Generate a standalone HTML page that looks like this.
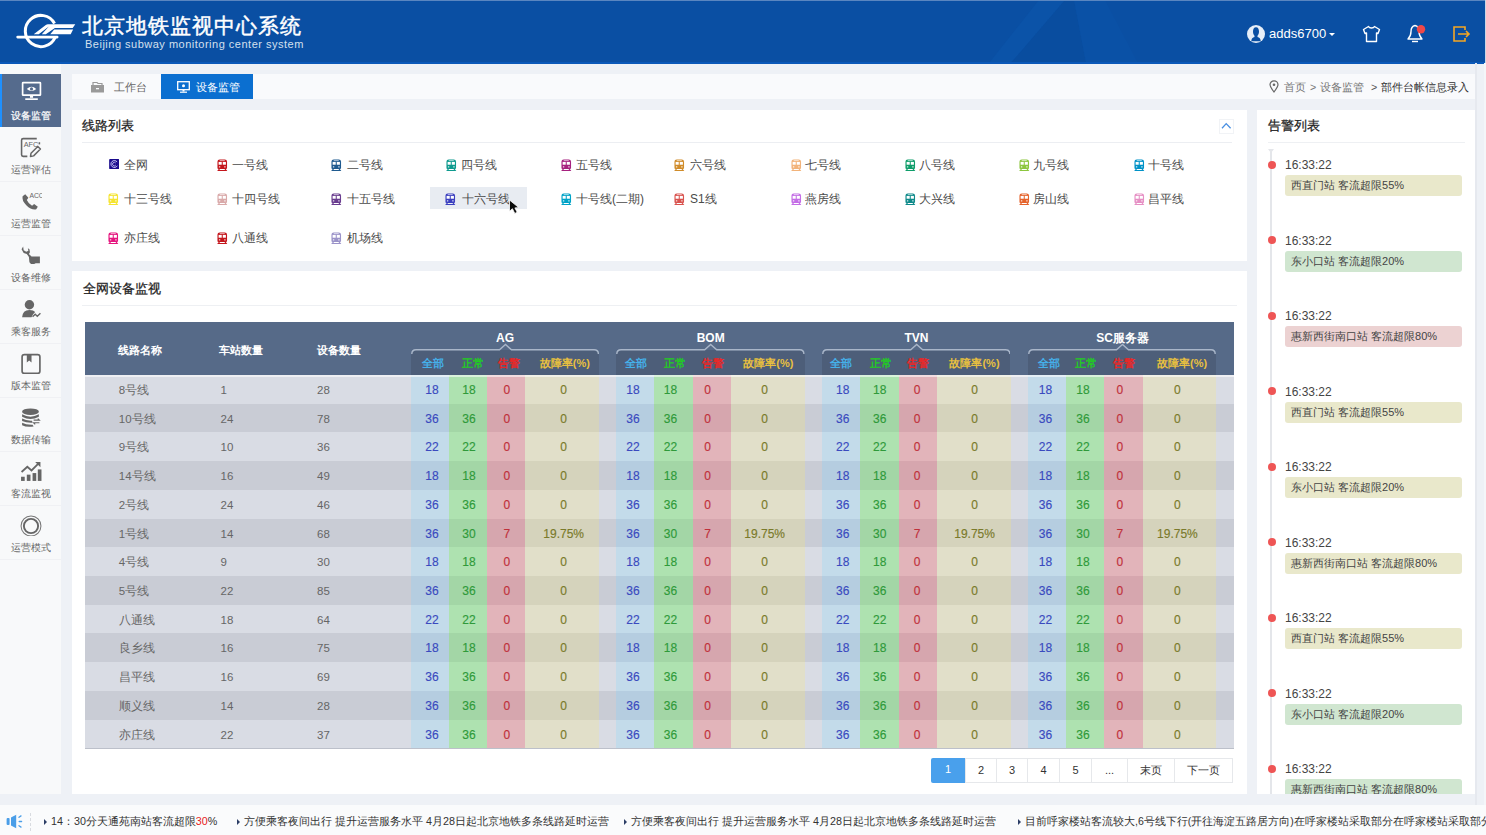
<!DOCTYPE html>
<html><head><meta charset="utf-8">
<style>
*{margin:0;padding:0;box-sizing:border-box}
html,body{width:1486px;height:835px;overflow:hidden;background:#eef1f6;font-family:"Liberation Sans",sans-serif;color:#333}
.a{position:absolute}
.nw{white-space:nowrap}
#hdr{position:absolute;left:0;top:0;width:1486px;height:63.6px;background:#0a4fa3;overflow:hidden}
.si{position:absolute;left:0;width:61px;height:54px}
.si span{position:absolute;left:0;width:61px;top:35px;font-size:10.4px;line-height:13px;color:#666;text-align:center;white-space:nowrap}
.si svg{position:absolute;left:19.5px;top:8.5px;width:22px;height:21px}
.ptitle{position:absolute;font-size:12.5px;line-height:16px;color:#222;-webkit-text-stroke:0.25px #222;white-space:nowrap}
.ln{position:absolute;font-size:12px;line-height:14px;color:#4a4a4a;white-space:nowrap}
.th{position:absolute;font-size:11px;line-height:14px;color:#fff;font-weight:bold;white-space:nowrap}
.gh{position:absolute;font-size:12px;line-height:14px;color:#fff;font-weight:bold;text-align:center;white-space:nowrap}
.sh{position:absolute;font-size:11px;line-height:14px;font-weight:bold;text-align:center;white-space:nowrap}
.td{position:absolute;font-size:11.5px;line-height:30px;color:#666;white-space:nowrap}
.tn{position:absolute;font-size:12px;line-height:30.5px;text-align:center;white-space:nowrap;-webkit-text-stroke:0.15px currentColor}
.pg{position:absolute;font-size:11px;line-height:23px;text-align:center;color:#333;top:758px;height:25px}
.al{position:absolute;width:177px;height:21px;border-radius:3px;font-size:11px;line-height:21px;padding-left:6px;color:#444;white-space:nowrap;overflow:hidden}
.tm{position:absolute;font-size:12px;line-height:14px;color:#444;white-space:nowrap}
.dot{position:absolute;width:8px;height:8px;border-radius:50%;background:#ee5555}
.tk{position:absolute;font-size:10.85px;line-height:14px;color:#333;white-space:nowrap;top:814px}
.tri{position:absolute;top:819px;width:0;height:0;border-top:3px solid transparent;border-bottom:3px solid transparent;border-left:3px solid #2c3e66}
</style></head><body>
<div id="hdr">
<svg class="a" style="left:0;top:0" width="1486" height="63" viewBox="0 0 1486 63">
<path d="M989 63 L1039 0 L1065 0 L1011 63 Z" fill="#0b53a8"/>
<path d="M1011 63 L1065 0 L1074 0 L1086 63 Z" fill="#094d9f"/>
<path d="M1086 63 L1074 0 L1105 0 L1138 63 Z" fill="#0a51a6"/>
</svg>
<div class="a" style="left:0;top:0;width:1486px;height:1px;background:#5a86c0"></div>
<div class="a" style="left:0;top:61.6px;width:1486px;height:2px;background:#0b58b8"></div>
<div class="a" style="left:1485px;top:0;width:1px;height:63px;background:#c9d6e6"></div>
<svg class="a" style="left:0;top:0" width="80" height="60" viewBox="0 0 80 60">
<path d="M54.54 23.44 A15.6 15.6 0 1 0 55.15 37.35" fill="none" stroke="#fff" stroke-width="3"/>
<rect x="16.3" y="35.7" width="42.2" height="2.7" rx="1.3" fill="#fff"/>
<path d="M33.7 34.3 L45.8 25 Q46.8 24.2 48 24.2 L75.3 24.2 L72.7 27.9 L54.9 27.9 L45.8 34.3 L41.8 34.3 L48.8 26.4 L38.7 34.3 Z" fill="#fff"/>
<path d="M50.2 34.3 L54.2 29.4 L73.1 29.4 L70.7 34.3 Z" fill="#fff"/>
</svg>
<div class="a nw" style="left:81.5px;top:12.8px;font-size:21px;line-height:26px;letter-spacing:1px;color:#fff;-webkit-text-stroke:0.45px #fff">北京地铁监视中心系统</div>
<div class="a nw" style="left:85px;top:37.5px;font-size:11px;line-height:13px;color:#d5e0ee;letter-spacing:0.5px">Beijing subway monitoring center system</div>
<svg class="a" style="left:1247px;top:25px" width="18" height="18" viewBox="0 0 18 18">
<circle cx="9" cy="9" r="9" fill="#e6eef8"/>
<path d="M9 2.3 C6.9 2.3 6 4.3 6 6.6 C6 8.6 6.7 10 7.5 10.8 L7.5 11.9 C5.6 12.4 4.4 13.6 4.3 16.2 L13.7 16.2 C13.6 13.6 12.4 12.4 10.5 11.9 L10.5 10.8 C11.3 10 12 8.6 12 6.6 C12 4.3 11.1 2.3 9 2.3 Z" fill="#0a4fa3"/>
</svg>
<div class="a nw" style="left:1269px;top:26px;font-size:13px;line-height:16px;color:#fff">adds6700</div>
<div class="a" style="left:1329px;top:33px;width:0;height:0;border-left:3px solid transparent;border-right:3px solid transparent;border-top:3.5px solid #fff"></div>
<svg class="a" style="left:1362px;top:25px" width="19" height="18" viewBox="0 0 19 18">
<path d="M6.5 1.5 L1.5 4.5 L3 8.5 L4.5 8 V16.5 H14.5 V8 L16 8.5 L17.5 4.5 L12.5 1.5 C11.5 3.5 7.5 3.5 6.5 1.5 Z" fill="none" stroke="#fff" stroke-width="1.4" stroke-linejoin="round"/>
</svg>
<svg class="a" style="left:1406px;top:24px" width="22" height="19" viewBox="0 0 22 19">
<path d="M9 1.5 C6.5 2 5 4.5 5 7.5 C5 10.5 4 13 2 15 H16 C14 13 13 10.5 13 7.5 C13 4.5 11.5 2 9 1.5 Z" fill="none" stroke="#fff" stroke-width="1.4" stroke-linejoin="round"/>
<rect x="6" y="16.8" width="6" height="1.4" fill="#fff"/>
<circle cx="15" cy="5.3" r="4.2" fill="#f04848"/>
</svg>
<svg class="a" style="left:1453px;top:26px" width="18" height="16" viewBox="0 0 18 16">
<path d="M12 4 V1 H1 V15 H12 V12" fill="none" stroke="#f5a623" stroke-width="1.6"/>
<path d="M5 8 H16 M13 5 L16 8 L13 11" fill="none" stroke="#f5a623" stroke-width="1.6"/>
</svg>
</div>

<div class="a" style="left:0;top:63.6px;width:61px;height:730.4px;background:#f8f9fa"></div>
<div class="si" style="top:74px;height:53px;background:#556b8d"><div class="a" style="left:0;top:0;width:2px;height:53px;background:#1e90ff"></div><svg style="top:7px" width="21" height="20" viewBox="0 0 21 20"><rect x="2.5" y="1.5" width="17" height="12" rx="0.5" fill="none" stroke="#fff" stroke-width="1.6"/><path d="M6.5 7.5 Q11 3.5 15.5 7.5 Q11 11.5 6.5 7.5Z" fill="#fff"/><circle cx="11" cy="7.5" r="1.5" fill="#556b8d"/><rect x="9.5" y="14" width="3" height="2" fill="#fff"/><rect x="5" y="16.5" width="12" height="1.6" fill="#fff"/></svg><span style="color:#fff;-webkit-text-stroke:0.2px #fff">设备监管</span></div>
<div class="si" style="top:128px;border-bottom:1px solid #f0f1f4"><svg width="21" height="20" viewBox="0 0 21 20"><path d="M16 1.5 H3 Q1.5 1.5 1.5 3 V17 Q1.5 18.5 3 18.5 H7" fill="none" stroke="#666" stroke-width="1.5"/><path d="M18.5 5 V7" fill="none" stroke="#666" stroke-width="1.5"/><text x="3.5" y="9.5" font-size="7" font-family="Liberation Sans" fill="#666">AFC</text><path d="M10 18.5 L10.5 15.5 L17 9 L19.5 11.5 L13 18 Z" fill="none" stroke="#666" stroke-width="1.4" stroke-linejoin="round"/></svg><span>运营评估</span></div>
<div class="si" style="top:182px;border-bottom:1px solid #f0f1f4"><svg width="21" height="20" viewBox="0 0 21 20"><path d="M2.5 5 L5 3 L8 6.5 L6.5 8.5 Q8 12 11.5 14 L13.5 12.5 L17 15 L15.5 17.5 Q11 18.5 6 13.5 Q1.5 9 2.5 5Z" fill="#666"/><text x="9" y="7" font-size="6.5" font-family="Liberation Sans" fill="#666">ACC</text></svg><span>运营监管</span></div>
<div class="si" style="top:236px;border-bottom:1px solid #f0f1f4"><svg width="21" height="20" viewBox="0 0 21 20"><path d="M3 1.5 L3.5 5 L6 6.5 L8 5.5 L7.5 3 L9 4 L9.5 7 L8.5 8.5 L11 11 H19 V17.5 H15 L13.5 18 H10.5 L9 16.5 L8.5 11.5 L6.5 8.5 L3.5 7.5 L1.5 4 Z" fill="#666"/></svg><span>设备维修</span></div>
<div class="si" style="top:290px;border-bottom:1px solid #f0f1f4"><svg width="21" height="20" viewBox="0 0 21 20"><circle cx="9" cy="5.5" r="4.5" fill="#666"/><path d="M2 17.5 Q2.5 10.5 9 10.5 Q13 10.5 14.5 12.5 L12.5 14.5 L11 17.5 Z" fill="#666"/><path d="M12 17 L14.5 14.5 L16.5 16.5 L19.5 13.5" fill="none" stroke="#666" stroke-width="1.3"/></svg><span>乘客服务</span></div>
<div class="si" style="top:344px;border-bottom:1px solid #f0f1f4"><svg width="21" height="20" viewBox="0 0 21 20"><rect x="2" y="1.5" width="17" height="18" rx="2.2" fill="none" stroke="#666" stroke-width="1.6"/><path d="M6.5 2 H11 V9 L8.75 7.2 L6.5 9 Z" fill="#666"/></svg><span>版本监管</span></div>
<div class="si" style="top:398px;border-bottom:1px solid #f0f1f4"><svg width="21" height="20" viewBox="0 0 21 20"><ellipse cx="10" cy="4.5" rx="8" ry="3.2" fill="#666"/><path d="M2 7 Q10 11.5 18 7 V9.3 Q10 13.5 2 9.3Z M2 11 Q6 13.3 11.5 13 L12 15 Q6 15.3 2 13.3Z M2 15 Q6 17.3 12 17 L13 18.5 Q6 19.5 2 17.3Z" fill="#666"/><path d="M13 12.5 H18.5 L17 11 M18.5 15 H13 L14.5 16.5" fill="none" stroke="#666" stroke-width="1.1"/></svg><span>数据传输</span></div>
<div class="si" style="top:452px;border-bottom:1px solid #f0f1f4"><svg width="21" height="20" viewBox="0 0 21 20"><path d="M1.5 10.5 L7 5.5 L11 9 L18 2" fill="none" stroke="#666" stroke-width="1.7"/><path d="M14.5 1 H19.5 V6 Z" fill="#666"/><rect x="1" y="15" width="3.5" height="4" fill="#666"/><rect x="6.5" y="13" width="3.5" height="6" fill="#666"/><rect x="12" y="11.5" width="3.5" height="7.5" fill="#666"/><rect x="17" y="8" width="3.5" height="11" fill="#666"/></svg><span>客流监视</span></div>
<div class="si" style="top:506px;border-bottom:1px solid #f0f1f4"><svg width="21" height="20" viewBox="0 0 21 20"><circle cx="10.5" cy="10.5" r="9.5" fill="none" stroke="#777" stroke-width="1"/><circle cx="10.5" cy="10.5" r="6.8" fill="none" stroke="#666" stroke-width="1.8"/></svg><span>运营模式</span></div>
<div class="a" style="left:72px;top:74px;width:1403px;height:25px;background:#f9fafc"></div>
<svg class="a" style="left:90px;top:81px" width="15" height="12" viewBox="0 0 15 12">
<path d="M1 4 H14 V11.5 H1 Z" fill="#9a9a9a"/><path d="M3 4 V1.5 H7 L8 2.5 H12 V4" fill="none" stroke="#9a9a9a" stroke-width="1.2"/><rect x="6" y="7" width="3" height="1.3" fill="#f9fafc"/>
</svg>
<div class="a nw" style="left:114px;top:80px;font-size:11px;line-height:14px;color:#666">工作台</div>
<div class="a" style="left:161px;top:74px;width:92px;height:25px;background:#0b6fd0"></div>
<svg class="a" style="left:177px;top:81px" width="13" height="12" viewBox="0 0 13 12">
<rect x="0.7" y="0.7" width="11.6" height="8" fill="none" stroke="#fff" stroke-width="1.3"/><circle cx="6.5" cy="4.7" r="1.5" fill="#fff"/><rect x="5.5" y="9" width="2" height="1.5" fill="#fff"/><rect x="3" y="10.6" width="7" height="1.2" fill="#fff"/>
</svg>
<div class="a nw" style="left:196px;top:80px;font-size:11px;line-height:14px;color:#fff">设备监管</div>
<svg class="a" style="left:1269px;top:80px" width="10" height="13" viewBox="0 0 10 13">
<path d="M5 12 C2 8 1 6.5 1 4.8 A4 4 0 0 1 9 4.8 C9 6.5 8 8 5 12Z" fill="none" stroke="#666" stroke-width="1.2"/><circle cx="5" cy="4.8" r="1.3" fill="#666"/>
</svg>
<div class="a nw" style="left:1284px;top:80px;font-size:10.7px;line-height:14px;color:#777">首页</div>
<div class="a nw" style="left:1310px;top:80px;font-size:10.7px;line-height:14px;color:#777">&gt;</div>
<div class="a nw" style="left:1320px;top:80px;font-size:10.7px;line-height:14px;color:#777">设备监管</div>
<div class="a nw" style="left:1371px;top:80px;font-size:10.7px;line-height:14px;color:#555">&gt;</div>
<div class="a nw" style="left:1380.5px;top:80px;font-size:10.7px;line-height:14px;color:#333">部件台帐信息录入</div>

<div class="a" style="left:72px;top:110px;width:1175px;height:151px;background:#fff"></div>
<div class="ptitle" style="left:82px;top:118px">线路列表</div>
<div class="a" style="left:82px;top:141.5px;width:1150px;height:1px;background:#eceef2"></div>
<div class="a" style="left:1218.5px;top:119px;width:15px;height:14.5px;border:1px solid #f1f3f6;background:#fff"></div>
<svg class="a" style="left:1221px;top:122px" width="11" height="8" viewBox="0 0 11 8"><path d="M1 6.2 L5.2 1.6 L9.6 6.2" fill="none" stroke="#4a90e2" stroke-width="1.3"/></svg>
<div class="a" style="left:430px;top:187px;width:97px;height:22px;background:#e8ecf2"></div>

<svg class="a" style="left:108.5px;top:158.7px" width="10.5" height="10.2" viewBox="0 0 11 11"><rect x="0" y="0" width="11" height="11" rx="1" fill="#1a0a8c"/><path d="M8.6 3.2 A3.7 3.7 0 1 0 8.8 7.3" fill="none" stroke="#d8d8ff" stroke-width="1"/><path d="M7 4.3 A1.9 1.9 0 1 0 7.1 6.6" fill="none" stroke="#d8d8ff" stroke-width="0.9"/></svg>
<div class="ln" style="left:124px;top:158px">全网</div>
<svg class="a" style="left:217px;top:158.5px" width="10.5" height="12.5" viewBox="0 0 10 12"><path d="M2.6 0.4 H7.4 Q9.6 0.4 9.6 2.6 V8.6 Q9.6 9.6 8.6 9.6 H1.4 Q0.4 9.6 0.4 8.6 V2.6 Q0.4 0.4 2.6 0.4Z" fill="#c4161c"/><rect x="2.6" y="1.2" width="4.8" height="0.8" fill="#fff" opacity="0.75"/><rect x="1.5" y="2.8" width="3" height="2.7" fill="#fff"/><rect x="5.5" y="2.8" width="3" height="2.7" fill="#fff"/><rect x="1.8" y="7" width="1.3" height="1.1" fill="#fff" opacity="0.9"/><rect x="6.9" y="7" width="1.3" height="1.1" fill="#fff" opacity="0.9"/><path d="M0.5 11.8 L2.4 9.5 M9.5 11.8 L7.6 9.5 M1.2 11 H8.8" stroke="#c4161c" stroke-width="1"/></svg>
<div class="ln" style="left:232px;top:158px">一号线</div>
<svg class="a" style="left:331px;top:158.5px" width="10.5" height="12.5" viewBox="0 0 10 12"><path d="M2.6 0.4 H7.4 Q9.6 0.4 9.6 2.6 V8.6 Q9.6 9.6 8.6 9.6 H1.4 Q0.4 9.6 0.4 8.6 V2.6 Q0.4 0.4 2.6 0.4Z" fill="#1f5a8f"/><rect x="2.6" y="1.2" width="4.8" height="0.8" fill="#fff" opacity="0.75"/><rect x="1.5" y="2.8" width="3" height="2.7" fill="#fff"/><rect x="5.5" y="2.8" width="3" height="2.7" fill="#fff"/><rect x="1.8" y="7" width="1.3" height="1.1" fill="#fff" opacity="0.9"/><rect x="6.9" y="7" width="1.3" height="1.1" fill="#fff" opacity="0.9"/><path d="M0.5 11.8 L2.4 9.5 M9.5 11.8 L7.6 9.5 M1.2 11 H8.8" stroke="#1f5a8f" stroke-width="1"/></svg>
<div class="ln" style="left:347px;top:158px">二号线</div>
<svg class="a" style="left:446px;top:158.5px" width="10.5" height="12.5" viewBox="0 0 10 12"><path d="M2.6 0.4 H7.4 Q9.6 0.4 9.6 2.6 V8.6 Q9.6 9.6 8.6 9.6 H1.4 Q0.4 9.6 0.4 8.6 V2.6 Q0.4 0.4 2.6 0.4Z" fill="#0e9a8e"/><rect x="2.6" y="1.2" width="4.8" height="0.8" fill="#fff" opacity="0.75"/><rect x="1.5" y="2.8" width="3" height="2.7" fill="#fff"/><rect x="5.5" y="2.8" width="3" height="2.7" fill="#fff"/><rect x="1.8" y="7" width="1.3" height="1.1" fill="#fff" opacity="0.9"/><rect x="6.9" y="7" width="1.3" height="1.1" fill="#fff" opacity="0.9"/><path d="M0.5 11.8 L2.4 9.5 M9.5 11.8 L7.6 9.5 M1.2 11 H8.8" stroke="#0e9a8e" stroke-width="1"/></svg>
<div class="ln" style="left:461px;top:158px">四号线</div>
<svg class="a" style="left:561px;top:158.5px" width="10.5" height="12.5" viewBox="0 0 10 12"><path d="M2.6 0.4 H7.4 Q9.6 0.4 9.6 2.6 V8.6 Q9.6 9.6 8.6 9.6 H1.4 Q0.4 9.6 0.4 8.6 V2.6 Q0.4 0.4 2.6 0.4Z" fill="#a6217f"/><rect x="2.6" y="1.2" width="4.8" height="0.8" fill="#fff" opacity="0.75"/><rect x="1.5" y="2.8" width="3" height="2.7" fill="#fff"/><rect x="5.5" y="2.8" width="3" height="2.7" fill="#fff"/><rect x="1.8" y="7" width="1.3" height="1.1" fill="#fff" opacity="0.9"/><rect x="6.9" y="7" width="1.3" height="1.1" fill="#fff" opacity="0.9"/><path d="M0.5 11.8 L2.4 9.5 M9.5 11.8 L7.6 9.5 M1.2 11 H8.8" stroke="#a6217f" stroke-width="1"/></svg>
<div class="ln" style="left:576px;top:158px">五号线</div>
<svg class="a" style="left:674px;top:158.5px" width="10.5" height="12.5" viewBox="0 0 10 12"><path d="M2.6 0.4 H7.4 Q9.6 0.4 9.6 2.6 V8.6 Q9.6 9.6 8.6 9.6 H1.4 Q0.4 9.6 0.4 8.6 V2.6 Q0.4 0.4 2.6 0.4Z" fill="#d08c2a"/><rect x="2.6" y="1.2" width="4.8" height="0.8" fill="#fff" opacity="0.75"/><rect x="1.5" y="2.8" width="3" height="2.7" fill="#fff"/><rect x="5.5" y="2.8" width="3" height="2.7" fill="#fff"/><rect x="1.8" y="7" width="1.3" height="1.1" fill="#fff" opacity="0.9"/><rect x="6.9" y="7" width="1.3" height="1.1" fill="#fff" opacity="0.9"/><path d="M0.5 11.8 L2.4 9.5 M9.5 11.8 L7.6 9.5 M1.2 11 H8.8" stroke="#d08c2a" stroke-width="1"/></svg>
<div class="ln" style="left:690px;top:158px">六号线</div>
<svg class="a" style="left:791px;top:158.5px" width="10.5" height="12.5" viewBox="0 0 10 12"><path d="M2.6 0.4 H7.4 Q9.6 0.4 9.6 2.6 V8.6 Q9.6 9.6 8.6 9.6 H1.4 Q0.4 9.6 0.4 8.6 V2.6 Q0.4 0.4 2.6 0.4Z" fill="#f2b37a"/><rect x="2.6" y="1.2" width="4.8" height="0.8" fill="#fff" opacity="0.75"/><rect x="1.5" y="2.8" width="3" height="2.7" fill="#fff"/><rect x="5.5" y="2.8" width="3" height="2.7" fill="#fff"/><rect x="1.8" y="7" width="1.3" height="1.1" fill="#fff" opacity="0.9"/><rect x="6.9" y="7" width="1.3" height="1.1" fill="#fff" opacity="0.9"/><path d="M0.5 11.8 L2.4 9.5 M9.5 11.8 L7.6 9.5 M1.2 11 H8.8" stroke="#f2b37a" stroke-width="1"/></svg>
<div class="ln" style="left:805px;top:158px">七号线</div>
<svg class="a" style="left:905px;top:158.5px" width="10.5" height="12.5" viewBox="0 0 10 12"><path d="M2.6 0.4 H7.4 Q9.6 0.4 9.6 2.6 V8.6 Q9.6 9.6 8.6 9.6 H1.4 Q0.4 9.6 0.4 8.6 V2.6 Q0.4 0.4 2.6 0.4Z" fill="#0f9d6a"/><rect x="2.6" y="1.2" width="4.8" height="0.8" fill="#fff" opacity="0.75"/><rect x="1.5" y="2.8" width="3" height="2.7" fill="#fff"/><rect x="5.5" y="2.8" width="3" height="2.7" fill="#fff"/><rect x="1.8" y="7" width="1.3" height="1.1" fill="#fff" opacity="0.9"/><rect x="6.9" y="7" width="1.3" height="1.1" fill="#fff" opacity="0.9"/><path d="M0.5 11.8 L2.4 9.5 M9.5 11.8 L7.6 9.5 M1.2 11 H8.8" stroke="#0f9d6a" stroke-width="1"/></svg>
<div class="ln" style="left:919px;top:158px">八号线</div>
<svg class="a" style="left:1019px;top:158.5px" width="10.5" height="12.5" viewBox="0 0 10 12"><path d="M2.6 0.4 H7.4 Q9.6 0.4 9.6 2.6 V8.6 Q9.6 9.6 8.6 9.6 H1.4 Q0.4 9.6 0.4 8.6 V2.6 Q0.4 0.4 2.6 0.4Z" fill="#8cc63f"/><rect x="2.6" y="1.2" width="4.8" height="0.8" fill="#fff" opacity="0.75"/><rect x="1.5" y="2.8" width="3" height="2.7" fill="#fff"/><rect x="5.5" y="2.8" width="3" height="2.7" fill="#fff"/><rect x="1.8" y="7" width="1.3" height="1.1" fill="#fff" opacity="0.9"/><rect x="6.9" y="7" width="1.3" height="1.1" fill="#fff" opacity="0.9"/><path d="M0.5 11.8 L2.4 9.5 M9.5 11.8 L7.6 9.5 M1.2 11 H8.8" stroke="#8cc63f" stroke-width="1"/></svg>
<div class="ln" style="left:1033px;top:158px">九号线</div>
<svg class="a" style="left:1134px;top:158.5px" width="10.5" height="12.5" viewBox="0 0 10 12"><path d="M2.6 0.4 H7.4 Q9.6 0.4 9.6 2.6 V8.6 Q9.6 9.6 8.6 9.6 H1.4 Q0.4 9.6 0.4 8.6 V2.6 Q0.4 0.4 2.6 0.4Z" fill="#0092c7"/><rect x="2.6" y="1.2" width="4.8" height="0.8" fill="#fff" opacity="0.75"/><rect x="1.5" y="2.8" width="3" height="2.7" fill="#fff"/><rect x="5.5" y="2.8" width="3" height="2.7" fill="#fff"/><rect x="1.8" y="7" width="1.3" height="1.1" fill="#fff" opacity="0.9"/><rect x="6.9" y="7" width="1.3" height="1.1" fill="#fff" opacity="0.9"/><path d="M0.5 11.8 L2.4 9.5 M9.5 11.8 L7.6 9.5 M1.2 11 H8.8" stroke="#0092c7" stroke-width="1"/></svg>
<div class="ln" style="left:1148px;top:158px">十号线</div>
<svg class="a" style="left:108px;top:192.5px" width="10.5" height="12.5" viewBox="0 0 10 12"><path d="M2.6 0.4 H7.4 Q9.6 0.4 9.6 2.6 V8.6 Q9.6 9.6 8.6 9.6 H1.4 Q0.4 9.6 0.4 8.6 V2.6 Q0.4 0.4 2.6 0.4Z" fill="#f5e431"/><rect x="2.6" y="1.2" width="4.8" height="0.8" fill="#fff" opacity="0.75"/><rect x="1.5" y="2.8" width="3" height="2.7" fill="#fff"/><rect x="5.5" y="2.8" width="3" height="2.7" fill="#fff"/><rect x="1.8" y="7" width="1.3" height="1.1" fill="#fff" opacity="0.9"/><rect x="6.9" y="7" width="1.3" height="1.1" fill="#fff" opacity="0.9"/><path d="M0.5 11.8 L2.4 9.5 M9.5 11.8 L7.6 9.5 M1.2 11 H8.8" stroke="#f5e431" stroke-width="1"/></svg>
<div class="ln" style="left:124px;top:192px">十三号线</div>
<svg class="a" style="left:217px;top:192.5px" width="10.5" height="12.5" viewBox="0 0 10 12"><path d="M2.6 0.4 H7.4 Q9.6 0.4 9.6 2.6 V8.6 Q9.6 9.6 8.6 9.6 H1.4 Q0.4 9.6 0.4 8.6 V2.6 Q0.4 0.4 2.6 0.4Z" fill="#d9a9a9"/><rect x="2.6" y="1.2" width="4.8" height="0.8" fill="#fff" opacity="0.75"/><rect x="1.5" y="2.8" width="3" height="2.7" fill="#fff"/><rect x="5.5" y="2.8" width="3" height="2.7" fill="#fff"/><rect x="1.8" y="7" width="1.3" height="1.1" fill="#fff" opacity="0.9"/><rect x="6.9" y="7" width="1.3" height="1.1" fill="#fff" opacity="0.9"/><path d="M0.5 11.8 L2.4 9.5 M9.5 11.8 L7.6 9.5 M1.2 11 H8.8" stroke="#d9a9a9" stroke-width="1"/></svg>
<div class="ln" style="left:232px;top:192px">十四号线</div>
<svg class="a" style="left:331px;top:192.5px" width="10.5" height="12.5" viewBox="0 0 10 12"><path d="M2.6 0.4 H7.4 Q9.6 0.4 9.6 2.6 V8.6 Q9.6 9.6 8.6 9.6 H1.4 Q0.4 9.6 0.4 8.6 V2.6 Q0.4 0.4 2.6 0.4Z" fill="#6a3d8f"/><rect x="2.6" y="1.2" width="4.8" height="0.8" fill="#fff" opacity="0.75"/><rect x="1.5" y="2.8" width="3" height="2.7" fill="#fff"/><rect x="5.5" y="2.8" width="3" height="2.7" fill="#fff"/><rect x="1.8" y="7" width="1.3" height="1.1" fill="#fff" opacity="0.9"/><rect x="6.9" y="7" width="1.3" height="1.1" fill="#fff" opacity="0.9"/><path d="M0.5 11.8 L2.4 9.5 M9.5 11.8 L7.6 9.5 M1.2 11 H8.8" stroke="#6a3d8f" stroke-width="1"/></svg>
<div class="ln" style="left:347px;top:192px">十五号线</div>
<svg class="a" style="left:445px;top:192.5px" width="10.5" height="12.5" viewBox="0 0 10 12"><path d="M2.6 0.4 H7.4 Q9.6 0.4 9.6 2.6 V8.6 Q9.6 9.6 8.6 9.6 H1.4 Q0.4 9.6 0.4 8.6 V2.6 Q0.4 0.4 2.6 0.4Z" fill="#3b3fbf"/><rect x="2.6" y="1.2" width="4.8" height="0.8" fill="#fff" opacity="0.75"/><rect x="1.5" y="2.8" width="3" height="2.7" fill="#fff"/><rect x="5.5" y="2.8" width="3" height="2.7" fill="#fff"/><rect x="1.8" y="7" width="1.3" height="1.1" fill="#fff" opacity="0.9"/><rect x="6.9" y="7" width="1.3" height="1.1" fill="#fff" opacity="0.9"/><path d="M0.5 11.8 L2.4 9.5 M9.5 11.8 L7.6 9.5 M1.2 11 H8.8" stroke="#3b3fbf" stroke-width="1"/></svg>
<div class="ln" style="left:462px;top:192px">十六号线</div>
<svg class="a" style="left:561px;top:192.5px" width="10.5" height="12.5" viewBox="0 0 10 12"><path d="M2.6 0.4 H7.4 Q9.6 0.4 9.6 2.6 V8.6 Q9.6 9.6 8.6 9.6 H1.4 Q0.4 9.6 0.4 8.6 V2.6 Q0.4 0.4 2.6 0.4Z" fill="#00a3c7"/><rect x="2.6" y="1.2" width="4.8" height="0.8" fill="#fff" opacity="0.75"/><rect x="1.5" y="2.8" width="3" height="2.7" fill="#fff"/><rect x="5.5" y="2.8" width="3" height="2.7" fill="#fff"/><rect x="1.8" y="7" width="1.3" height="1.1" fill="#fff" opacity="0.9"/><rect x="6.9" y="7" width="1.3" height="1.1" fill="#fff" opacity="0.9"/><path d="M0.5 11.8 L2.4 9.5 M9.5 11.8 L7.6 9.5 M1.2 11 H8.8" stroke="#00a3c7" stroke-width="1"/></svg>
<div class="ln" style="left:576px;top:192px">十号线(二期)</div>
<svg class="a" style="left:674px;top:192.5px" width="10.5" height="12.5" viewBox="0 0 10 12"><path d="M2.6 0.4 H7.4 Q9.6 0.4 9.6 2.6 V8.6 Q9.6 9.6 8.6 9.6 H1.4 Q0.4 9.6 0.4 8.6 V2.6 Q0.4 0.4 2.6 0.4Z" fill="#d9534f"/><rect x="2.6" y="1.2" width="4.8" height="0.8" fill="#fff" opacity="0.75"/><rect x="1.5" y="2.8" width="3" height="2.7" fill="#fff"/><rect x="5.5" y="2.8" width="3" height="2.7" fill="#fff"/><rect x="1.8" y="7" width="1.3" height="1.1" fill="#fff" opacity="0.9"/><rect x="6.9" y="7" width="1.3" height="1.1" fill="#fff" opacity="0.9"/><path d="M0.5 11.8 L2.4 9.5 M9.5 11.8 L7.6 9.5 M1.2 11 H8.8" stroke="#d9534f" stroke-width="1"/></svg>
<div class="ln" style="left:690px;top:192px">S1线</div>
<svg class="a" style="left:791px;top:192.5px" width="10.5" height="12.5" viewBox="0 0 10 12"><path d="M2.6 0.4 H7.4 Q9.6 0.4 9.6 2.6 V8.6 Q9.6 9.6 8.6 9.6 H1.4 Q0.4 9.6 0.4 8.6 V2.6 Q0.4 0.4 2.6 0.4Z" fill="#c46de6"/><rect x="2.6" y="1.2" width="4.8" height="0.8" fill="#fff" opacity="0.75"/><rect x="1.5" y="2.8" width="3" height="2.7" fill="#fff"/><rect x="5.5" y="2.8" width="3" height="2.7" fill="#fff"/><rect x="1.8" y="7" width="1.3" height="1.1" fill="#fff" opacity="0.9"/><rect x="6.9" y="7" width="1.3" height="1.1" fill="#fff" opacity="0.9"/><path d="M0.5 11.8 L2.4 9.5 M9.5 11.8 L7.6 9.5 M1.2 11 H8.8" stroke="#c46de6" stroke-width="1"/></svg>
<div class="ln" style="left:805px;top:192px">燕房线</div>
<svg class="a" style="left:905px;top:192.5px" width="10.5" height="12.5" viewBox="0 0 10 12"><path d="M2.6 0.4 H7.4 Q9.6 0.4 9.6 2.6 V8.6 Q9.6 9.6 8.6 9.6 H1.4 Q0.4 9.6 0.4 8.6 V2.6 Q0.4 0.4 2.6 0.4Z" fill="#0e8a8a"/><rect x="2.6" y="1.2" width="4.8" height="0.8" fill="#fff" opacity="0.75"/><rect x="1.5" y="2.8" width="3" height="2.7" fill="#fff"/><rect x="5.5" y="2.8" width="3" height="2.7" fill="#fff"/><rect x="1.8" y="7" width="1.3" height="1.1" fill="#fff" opacity="0.9"/><rect x="6.9" y="7" width="1.3" height="1.1" fill="#fff" opacity="0.9"/><path d="M0.5 11.8 L2.4 9.5 M9.5 11.8 L7.6 9.5 M1.2 11 H8.8" stroke="#0e8a8a" stroke-width="1"/></svg>
<div class="ln" style="left:919px;top:192px">大兴线</div>
<svg class="a" style="left:1019px;top:192.5px" width="10.5" height="12.5" viewBox="0 0 10 12"><path d="M2.6 0.4 H7.4 Q9.6 0.4 9.6 2.6 V8.6 Q9.6 9.6 8.6 9.6 H1.4 Q0.4 9.6 0.4 8.6 V2.6 Q0.4 0.4 2.6 0.4Z" fill="#e5632b"/><rect x="2.6" y="1.2" width="4.8" height="0.8" fill="#fff" opacity="0.75"/><rect x="1.5" y="2.8" width="3" height="2.7" fill="#fff"/><rect x="5.5" y="2.8" width="3" height="2.7" fill="#fff"/><rect x="1.8" y="7" width="1.3" height="1.1" fill="#fff" opacity="0.9"/><rect x="6.9" y="7" width="1.3" height="1.1" fill="#fff" opacity="0.9"/><path d="M0.5 11.8 L2.4 9.5 M9.5 11.8 L7.6 9.5 M1.2 11 H8.8" stroke="#e5632b" stroke-width="1"/></svg>
<div class="ln" style="left:1033px;top:192px">房山线</div>
<svg class="a" style="left:1134px;top:192.5px" width="10.5" height="12.5" viewBox="0 0 10 12"><path d="M2.6 0.4 H7.4 Q9.6 0.4 9.6 2.6 V8.6 Q9.6 9.6 8.6 9.6 H1.4 Q0.4 9.6 0.4 8.6 V2.6 Q0.4 0.4 2.6 0.4Z" fill="#e68fc4"/><rect x="2.6" y="1.2" width="4.8" height="0.8" fill="#fff" opacity="0.75"/><rect x="1.5" y="2.8" width="3" height="2.7" fill="#fff"/><rect x="5.5" y="2.8" width="3" height="2.7" fill="#fff"/><rect x="1.8" y="7" width="1.3" height="1.1" fill="#fff" opacity="0.9"/><rect x="6.9" y="7" width="1.3" height="1.1" fill="#fff" opacity="0.9"/><path d="M0.5 11.8 L2.4 9.5 M9.5 11.8 L7.6 9.5 M1.2 11 H8.8" stroke="#e68fc4" stroke-width="1"/></svg>
<div class="ln" style="left:1148px;top:192px">昌平线</div>
<svg class="a" style="left:108px;top:231.5px" width="10.5" height="12.5" viewBox="0 0 10 12"><path d="M2.6 0.4 H7.4 Q9.6 0.4 9.6 2.6 V8.6 Q9.6 9.6 8.6 9.6 H1.4 Q0.4 9.6 0.4 8.6 V2.6 Q0.4 0.4 2.6 0.4Z" fill="#e5157e"/><rect x="2.6" y="1.2" width="4.8" height="0.8" fill="#fff" opacity="0.75"/><rect x="1.5" y="2.8" width="3" height="2.7" fill="#fff"/><rect x="5.5" y="2.8" width="3" height="2.7" fill="#fff"/><rect x="1.8" y="7" width="1.3" height="1.1" fill="#fff" opacity="0.9"/><rect x="6.9" y="7" width="1.3" height="1.1" fill="#fff" opacity="0.9"/><path d="M0.5 11.8 L2.4 9.5 M9.5 11.8 L7.6 9.5 M1.2 11 H8.8" stroke="#e5157e" stroke-width="1"/></svg>
<div class="ln" style="left:124px;top:231px">亦庄线</div>
<svg class="a" style="left:217px;top:231.5px" width="10.5" height="12.5" viewBox="0 0 10 12"><path d="M2.6 0.4 H7.4 Q9.6 0.4 9.6 2.6 V8.6 Q9.6 9.6 8.6 9.6 H1.4 Q0.4 9.6 0.4 8.6 V2.6 Q0.4 0.4 2.6 0.4Z" fill="#c4161c"/><rect x="2.6" y="1.2" width="4.8" height="0.8" fill="#fff" opacity="0.75"/><rect x="1.5" y="2.8" width="3" height="2.7" fill="#fff"/><rect x="5.5" y="2.8" width="3" height="2.7" fill="#fff"/><rect x="1.8" y="7" width="1.3" height="1.1" fill="#fff" opacity="0.9"/><rect x="6.9" y="7" width="1.3" height="1.1" fill="#fff" opacity="0.9"/><path d="M0.5 11.8 L2.4 9.5 M9.5 11.8 L7.6 9.5 M1.2 11 H8.8" stroke="#c4161c" stroke-width="1"/></svg>
<div class="ln" style="left:232px;top:231px">八通线</div>
<svg class="a" style="left:331px;top:231.5px" width="10.5" height="12.5" viewBox="0 0 10 12"><path d="M2.6 0.4 H7.4 Q9.6 0.4 9.6 2.6 V8.6 Q9.6 9.6 8.6 9.6 H1.4 Q0.4 9.6 0.4 8.6 V2.6 Q0.4 0.4 2.6 0.4Z" fill="#9b93c9"/><rect x="2.6" y="1.2" width="4.8" height="0.8" fill="#fff" opacity="0.75"/><rect x="1.5" y="2.8" width="3" height="2.7" fill="#fff"/><rect x="5.5" y="2.8" width="3" height="2.7" fill="#fff"/><rect x="1.8" y="7" width="1.3" height="1.1" fill="#fff" opacity="0.9"/><rect x="6.9" y="7" width="1.3" height="1.1" fill="#fff" opacity="0.9"/><path d="M0.5 11.8 L2.4 9.5 M9.5 11.8 L7.6 9.5 M1.2 11 H8.8" stroke="#9b93c9" stroke-width="1"/></svg>
<div class="ln" style="left:347px;top:231px">机场线</div>
<svg class="a" style="left:507.5px;top:198.5px" width="12" height="16" viewBox="0 0 12 16"><path d="M1.5 1 L1.5 12.3 L4.4 9.7 L6.8 14.4 L9.2 13.3 L6.9 8.9 L10.8 8.6 Z" fill="#0a0a0a" stroke="#fff" stroke-width="0.8" stroke-linejoin="round"/></svg>
<div class="a" style="left:72px;top:271px;width:1175px;height:523px;background:#fff"></div>
<div class="ptitle" style="left:83px;top:281px">全网设备监视</div>
<div class="a" style="left:82px;top:305px;width:1155px;height:1px;background:#eef0f3"></div>
<div class="a" style="left:85px;top:322px;width:1149px;height:53px;background:#566a88"></div>
<div class="th" style="left:118px;top:343px">线路名称</div>
<div class="th" style="left:219px;top:343px">车站数量</div>
<div class="th" style="left:317px;top:343px">设备数量</div>
<div class="a" style="left:85px;top:375px;width:1149px;height:28.97px;background:#d9dce4"></div>
<div class="a" style="left:410.5px;top:375px;width:39px;height:28.97px;background:#c3dbea"></div>
<div class="a" style="left:449.3px;top:375px;width:38.1px;height:28.97px;background:#aee2b0"></div>
<div class="a" style="left:487.2px;top:375px;width:38.2px;height:28.97px;background:#e2b4ba"></div>
<div class="a" style="left:525.2px;top:375px;width:73.7px;height:28.97px;background:#e1dfc9"></div>
<div class="a" style="left:616px;top:375px;width:38.6px;height:28.97px;background:#c3dbea"></div>
<div class="a" style="left:654.4px;top:375px;width:38.4px;height:28.97px;background:#aee2b0"></div>
<div class="a" style="left:692.6px;top:375px;width:38.7px;height:28.97px;background:#e2b4ba"></div>
<div class="a" style="left:731.1px;top:375px;width:73.8px;height:28.97px;background:#e1dfc9"></div>
<div class="a" style="left:821.7px;top:375px;width:38.7px;height:28.97px;background:#c3dbea"></div>
<div class="a" style="left:860.2px;top:375px;width:38.6px;height:28.97px;background:#aee2b0"></div>
<div class="a" style="left:898.6px;top:375px;width:38.7px;height:28.97px;background:#e2b4ba"></div>
<div class="a" style="left:937.1px;top:375px;width:73.5px;height:28.97px;background:#e1dfc9"></div>
<div class="a" style="left:1028px;top:375px;width:38.4px;height:28.97px;background:#c3dbea"></div>
<div class="a" style="left:1066.2px;top:375px;width:38.4px;height:28.97px;background:#aee2b0"></div>
<div class="a" style="left:1104.4px;top:375px;width:38.4px;height:28.97px;background:#e2b4ba"></div>
<div class="a" style="left:1142.6px;top:375px;width:73.6px;height:28.97px;background:#e1dfc9"></div>
<div class="a" style="left:85px;top:403.72px;width:1149px;height:28.97px;background:#c9ccd5"></div>
<div class="a" style="left:410.5px;top:403.72px;width:39px;height:28.97px;background:#b5cde0"></div>
<div class="a" style="left:449.3px;top:403.72px;width:38.1px;height:28.97px;background:#a3d6a6"></div>
<div class="a" style="left:487.2px;top:403.72px;width:38.2px;height:28.97px;background:#d6a6ae"></div>
<div class="a" style="left:525.2px;top:403.72px;width:73.7px;height:28.97px;background:#d5d3bc"></div>
<div class="a" style="left:616px;top:403.72px;width:38.6px;height:28.97px;background:#b5cde0"></div>
<div class="a" style="left:654.4px;top:403.72px;width:38.4px;height:28.97px;background:#a3d6a6"></div>
<div class="a" style="left:692.6px;top:403.72px;width:38.7px;height:28.97px;background:#d6a6ae"></div>
<div class="a" style="left:731.1px;top:403.72px;width:73.8px;height:28.97px;background:#d5d3bc"></div>
<div class="a" style="left:821.7px;top:403.72px;width:38.7px;height:28.97px;background:#b5cde0"></div>
<div class="a" style="left:860.2px;top:403.72px;width:38.6px;height:28.97px;background:#a3d6a6"></div>
<div class="a" style="left:898.6px;top:403.72px;width:38.7px;height:28.97px;background:#d6a6ae"></div>
<div class="a" style="left:937.1px;top:403.72px;width:73.5px;height:28.97px;background:#d5d3bc"></div>
<div class="a" style="left:1028px;top:403.72px;width:38.4px;height:28.97px;background:#b5cde0"></div>
<div class="a" style="left:1066.2px;top:403.72px;width:38.4px;height:28.97px;background:#a3d6a6"></div>
<div class="a" style="left:1104.4px;top:403.72px;width:38.4px;height:28.97px;background:#d6a6ae"></div>
<div class="a" style="left:1142.6px;top:403.72px;width:73.6px;height:28.97px;background:#d5d3bc"></div>
<div class="a" style="left:85px;top:432.44px;width:1149px;height:28.97px;background:#d9dce4"></div>
<div class="a" style="left:410.5px;top:432.44px;width:39px;height:28.97px;background:#c3dbea"></div>
<div class="a" style="left:449.3px;top:432.44px;width:38.1px;height:28.97px;background:#aee2b0"></div>
<div class="a" style="left:487.2px;top:432.44px;width:38.2px;height:28.97px;background:#e2b4ba"></div>
<div class="a" style="left:525.2px;top:432.44px;width:73.7px;height:28.97px;background:#e1dfc9"></div>
<div class="a" style="left:616px;top:432.44px;width:38.6px;height:28.97px;background:#c3dbea"></div>
<div class="a" style="left:654.4px;top:432.44px;width:38.4px;height:28.97px;background:#aee2b0"></div>
<div class="a" style="left:692.6px;top:432.44px;width:38.7px;height:28.97px;background:#e2b4ba"></div>
<div class="a" style="left:731.1px;top:432.44px;width:73.8px;height:28.97px;background:#e1dfc9"></div>
<div class="a" style="left:821.7px;top:432.44px;width:38.7px;height:28.97px;background:#c3dbea"></div>
<div class="a" style="left:860.2px;top:432.44px;width:38.6px;height:28.97px;background:#aee2b0"></div>
<div class="a" style="left:898.6px;top:432.44px;width:38.7px;height:28.97px;background:#e2b4ba"></div>
<div class="a" style="left:937.1px;top:432.44px;width:73.5px;height:28.97px;background:#e1dfc9"></div>
<div class="a" style="left:1028px;top:432.44px;width:38.4px;height:28.97px;background:#c3dbea"></div>
<div class="a" style="left:1066.2px;top:432.44px;width:38.4px;height:28.97px;background:#aee2b0"></div>
<div class="a" style="left:1104.4px;top:432.44px;width:38.4px;height:28.97px;background:#e2b4ba"></div>
<div class="a" style="left:1142.6px;top:432.44px;width:73.6px;height:28.97px;background:#e1dfc9"></div>
<div class="a" style="left:85px;top:461.16px;width:1149px;height:28.97px;background:#c9ccd5"></div>
<div class="a" style="left:410.5px;top:461.16px;width:39px;height:28.97px;background:#b5cde0"></div>
<div class="a" style="left:449.3px;top:461.16px;width:38.1px;height:28.97px;background:#a3d6a6"></div>
<div class="a" style="left:487.2px;top:461.16px;width:38.2px;height:28.97px;background:#d6a6ae"></div>
<div class="a" style="left:525.2px;top:461.16px;width:73.7px;height:28.97px;background:#d5d3bc"></div>
<div class="a" style="left:616px;top:461.16px;width:38.6px;height:28.97px;background:#b5cde0"></div>
<div class="a" style="left:654.4px;top:461.16px;width:38.4px;height:28.97px;background:#a3d6a6"></div>
<div class="a" style="left:692.6px;top:461.16px;width:38.7px;height:28.97px;background:#d6a6ae"></div>
<div class="a" style="left:731.1px;top:461.16px;width:73.8px;height:28.97px;background:#d5d3bc"></div>
<div class="a" style="left:821.7px;top:461.16px;width:38.7px;height:28.97px;background:#b5cde0"></div>
<div class="a" style="left:860.2px;top:461.16px;width:38.6px;height:28.97px;background:#a3d6a6"></div>
<div class="a" style="left:898.6px;top:461.16px;width:38.7px;height:28.97px;background:#d6a6ae"></div>
<div class="a" style="left:937.1px;top:461.16px;width:73.5px;height:28.97px;background:#d5d3bc"></div>
<div class="a" style="left:1028px;top:461.16px;width:38.4px;height:28.97px;background:#b5cde0"></div>
<div class="a" style="left:1066.2px;top:461.16px;width:38.4px;height:28.97px;background:#a3d6a6"></div>
<div class="a" style="left:1104.4px;top:461.16px;width:38.4px;height:28.97px;background:#d6a6ae"></div>
<div class="a" style="left:1142.6px;top:461.16px;width:73.6px;height:28.97px;background:#d5d3bc"></div>
<div class="a" style="left:85px;top:489.88px;width:1149px;height:28.97px;background:#d9dce4"></div>
<div class="a" style="left:410.5px;top:489.88px;width:39px;height:28.97px;background:#c3dbea"></div>
<div class="a" style="left:449.3px;top:489.88px;width:38.1px;height:28.97px;background:#aee2b0"></div>
<div class="a" style="left:487.2px;top:489.88px;width:38.2px;height:28.97px;background:#e2b4ba"></div>
<div class="a" style="left:525.2px;top:489.88px;width:73.7px;height:28.97px;background:#e1dfc9"></div>
<div class="a" style="left:616px;top:489.88px;width:38.6px;height:28.97px;background:#c3dbea"></div>
<div class="a" style="left:654.4px;top:489.88px;width:38.4px;height:28.97px;background:#aee2b0"></div>
<div class="a" style="left:692.6px;top:489.88px;width:38.7px;height:28.97px;background:#e2b4ba"></div>
<div class="a" style="left:731.1px;top:489.88px;width:73.8px;height:28.97px;background:#e1dfc9"></div>
<div class="a" style="left:821.7px;top:489.88px;width:38.7px;height:28.97px;background:#c3dbea"></div>
<div class="a" style="left:860.2px;top:489.88px;width:38.6px;height:28.97px;background:#aee2b0"></div>
<div class="a" style="left:898.6px;top:489.88px;width:38.7px;height:28.97px;background:#e2b4ba"></div>
<div class="a" style="left:937.1px;top:489.88px;width:73.5px;height:28.97px;background:#e1dfc9"></div>
<div class="a" style="left:1028px;top:489.88px;width:38.4px;height:28.97px;background:#c3dbea"></div>
<div class="a" style="left:1066.2px;top:489.88px;width:38.4px;height:28.97px;background:#aee2b0"></div>
<div class="a" style="left:1104.4px;top:489.88px;width:38.4px;height:28.97px;background:#e2b4ba"></div>
<div class="a" style="left:1142.6px;top:489.88px;width:73.6px;height:28.97px;background:#e1dfc9"></div>
<div class="a" style="left:85px;top:518.6px;width:1149px;height:28.97px;background:#c9ccd5"></div>
<div class="a" style="left:410.5px;top:518.6px;width:39px;height:28.97px;background:#b5cde0"></div>
<div class="a" style="left:449.3px;top:518.6px;width:38.1px;height:28.97px;background:#a3d6a6"></div>
<div class="a" style="left:487.2px;top:518.6px;width:38.2px;height:28.97px;background:#d6a6ae"></div>
<div class="a" style="left:525.2px;top:518.6px;width:73.7px;height:28.97px;background:#d5d3bc"></div>
<div class="a" style="left:616px;top:518.6px;width:38.6px;height:28.97px;background:#b5cde0"></div>
<div class="a" style="left:654.4px;top:518.6px;width:38.4px;height:28.97px;background:#a3d6a6"></div>
<div class="a" style="left:692.6px;top:518.6px;width:38.7px;height:28.97px;background:#d6a6ae"></div>
<div class="a" style="left:731.1px;top:518.6px;width:73.8px;height:28.97px;background:#d5d3bc"></div>
<div class="a" style="left:821.7px;top:518.6px;width:38.7px;height:28.97px;background:#b5cde0"></div>
<div class="a" style="left:860.2px;top:518.6px;width:38.6px;height:28.97px;background:#a3d6a6"></div>
<div class="a" style="left:898.6px;top:518.6px;width:38.7px;height:28.97px;background:#d6a6ae"></div>
<div class="a" style="left:937.1px;top:518.6px;width:73.5px;height:28.97px;background:#d5d3bc"></div>
<div class="a" style="left:1028px;top:518.6px;width:38.4px;height:28.97px;background:#b5cde0"></div>
<div class="a" style="left:1066.2px;top:518.6px;width:38.4px;height:28.97px;background:#a3d6a6"></div>
<div class="a" style="left:1104.4px;top:518.6px;width:38.4px;height:28.97px;background:#d6a6ae"></div>
<div class="a" style="left:1142.6px;top:518.6px;width:73.6px;height:28.97px;background:#d5d3bc"></div>
<div class="a" style="left:85px;top:547.32px;width:1149px;height:28.97px;background:#d9dce4"></div>
<div class="a" style="left:410.5px;top:547.32px;width:39px;height:28.97px;background:#c3dbea"></div>
<div class="a" style="left:449.3px;top:547.32px;width:38.1px;height:28.97px;background:#aee2b0"></div>
<div class="a" style="left:487.2px;top:547.32px;width:38.2px;height:28.97px;background:#e2b4ba"></div>
<div class="a" style="left:525.2px;top:547.32px;width:73.7px;height:28.97px;background:#e1dfc9"></div>
<div class="a" style="left:616px;top:547.32px;width:38.6px;height:28.97px;background:#c3dbea"></div>
<div class="a" style="left:654.4px;top:547.32px;width:38.4px;height:28.97px;background:#aee2b0"></div>
<div class="a" style="left:692.6px;top:547.32px;width:38.7px;height:28.97px;background:#e2b4ba"></div>
<div class="a" style="left:731.1px;top:547.32px;width:73.8px;height:28.97px;background:#e1dfc9"></div>
<div class="a" style="left:821.7px;top:547.32px;width:38.7px;height:28.97px;background:#c3dbea"></div>
<div class="a" style="left:860.2px;top:547.32px;width:38.6px;height:28.97px;background:#aee2b0"></div>
<div class="a" style="left:898.6px;top:547.32px;width:38.7px;height:28.97px;background:#e2b4ba"></div>
<div class="a" style="left:937.1px;top:547.32px;width:73.5px;height:28.97px;background:#e1dfc9"></div>
<div class="a" style="left:1028px;top:547.32px;width:38.4px;height:28.97px;background:#c3dbea"></div>
<div class="a" style="left:1066.2px;top:547.32px;width:38.4px;height:28.97px;background:#aee2b0"></div>
<div class="a" style="left:1104.4px;top:547.32px;width:38.4px;height:28.97px;background:#e2b4ba"></div>
<div class="a" style="left:1142.6px;top:547.32px;width:73.6px;height:28.97px;background:#e1dfc9"></div>
<div class="a" style="left:85px;top:576.04px;width:1149px;height:28.97px;background:#c9ccd5"></div>
<div class="a" style="left:410.5px;top:576.04px;width:39px;height:28.97px;background:#b5cde0"></div>
<div class="a" style="left:449.3px;top:576.04px;width:38.1px;height:28.97px;background:#a3d6a6"></div>
<div class="a" style="left:487.2px;top:576.04px;width:38.2px;height:28.97px;background:#d6a6ae"></div>
<div class="a" style="left:525.2px;top:576.04px;width:73.7px;height:28.97px;background:#d5d3bc"></div>
<div class="a" style="left:616px;top:576.04px;width:38.6px;height:28.97px;background:#b5cde0"></div>
<div class="a" style="left:654.4px;top:576.04px;width:38.4px;height:28.97px;background:#a3d6a6"></div>
<div class="a" style="left:692.6px;top:576.04px;width:38.7px;height:28.97px;background:#d6a6ae"></div>
<div class="a" style="left:731.1px;top:576.04px;width:73.8px;height:28.97px;background:#d5d3bc"></div>
<div class="a" style="left:821.7px;top:576.04px;width:38.7px;height:28.97px;background:#b5cde0"></div>
<div class="a" style="left:860.2px;top:576.04px;width:38.6px;height:28.97px;background:#a3d6a6"></div>
<div class="a" style="left:898.6px;top:576.04px;width:38.7px;height:28.97px;background:#d6a6ae"></div>
<div class="a" style="left:937.1px;top:576.04px;width:73.5px;height:28.97px;background:#d5d3bc"></div>
<div class="a" style="left:1028px;top:576.04px;width:38.4px;height:28.97px;background:#b5cde0"></div>
<div class="a" style="left:1066.2px;top:576.04px;width:38.4px;height:28.97px;background:#a3d6a6"></div>
<div class="a" style="left:1104.4px;top:576.04px;width:38.4px;height:28.97px;background:#d6a6ae"></div>
<div class="a" style="left:1142.6px;top:576.04px;width:73.6px;height:28.97px;background:#d5d3bc"></div>
<div class="a" style="left:85px;top:604.76px;width:1149px;height:28.97px;background:#d9dce4"></div>
<div class="a" style="left:410.5px;top:604.76px;width:39px;height:28.97px;background:#c3dbea"></div>
<div class="a" style="left:449.3px;top:604.76px;width:38.1px;height:28.97px;background:#aee2b0"></div>
<div class="a" style="left:487.2px;top:604.76px;width:38.2px;height:28.97px;background:#e2b4ba"></div>
<div class="a" style="left:525.2px;top:604.76px;width:73.7px;height:28.97px;background:#e1dfc9"></div>
<div class="a" style="left:616px;top:604.76px;width:38.6px;height:28.97px;background:#c3dbea"></div>
<div class="a" style="left:654.4px;top:604.76px;width:38.4px;height:28.97px;background:#aee2b0"></div>
<div class="a" style="left:692.6px;top:604.76px;width:38.7px;height:28.97px;background:#e2b4ba"></div>
<div class="a" style="left:731.1px;top:604.76px;width:73.8px;height:28.97px;background:#e1dfc9"></div>
<div class="a" style="left:821.7px;top:604.76px;width:38.7px;height:28.97px;background:#c3dbea"></div>
<div class="a" style="left:860.2px;top:604.76px;width:38.6px;height:28.97px;background:#aee2b0"></div>
<div class="a" style="left:898.6px;top:604.76px;width:38.7px;height:28.97px;background:#e2b4ba"></div>
<div class="a" style="left:937.1px;top:604.76px;width:73.5px;height:28.97px;background:#e1dfc9"></div>
<div class="a" style="left:1028px;top:604.76px;width:38.4px;height:28.97px;background:#c3dbea"></div>
<div class="a" style="left:1066.2px;top:604.76px;width:38.4px;height:28.97px;background:#aee2b0"></div>
<div class="a" style="left:1104.4px;top:604.76px;width:38.4px;height:28.97px;background:#e2b4ba"></div>
<div class="a" style="left:1142.6px;top:604.76px;width:73.6px;height:28.97px;background:#e1dfc9"></div>
<div class="a" style="left:85px;top:633.48px;width:1149px;height:28.97px;background:#c9ccd5"></div>
<div class="a" style="left:410.5px;top:633.48px;width:39px;height:28.97px;background:#b5cde0"></div>
<div class="a" style="left:449.3px;top:633.48px;width:38.1px;height:28.97px;background:#a3d6a6"></div>
<div class="a" style="left:487.2px;top:633.48px;width:38.2px;height:28.97px;background:#d6a6ae"></div>
<div class="a" style="left:525.2px;top:633.48px;width:73.7px;height:28.97px;background:#d5d3bc"></div>
<div class="a" style="left:616px;top:633.48px;width:38.6px;height:28.97px;background:#b5cde0"></div>
<div class="a" style="left:654.4px;top:633.48px;width:38.4px;height:28.97px;background:#a3d6a6"></div>
<div class="a" style="left:692.6px;top:633.48px;width:38.7px;height:28.97px;background:#d6a6ae"></div>
<div class="a" style="left:731.1px;top:633.48px;width:73.8px;height:28.97px;background:#d5d3bc"></div>
<div class="a" style="left:821.7px;top:633.48px;width:38.7px;height:28.97px;background:#b5cde0"></div>
<div class="a" style="left:860.2px;top:633.48px;width:38.6px;height:28.97px;background:#a3d6a6"></div>
<div class="a" style="left:898.6px;top:633.48px;width:38.7px;height:28.97px;background:#d6a6ae"></div>
<div class="a" style="left:937.1px;top:633.48px;width:73.5px;height:28.97px;background:#d5d3bc"></div>
<div class="a" style="left:1028px;top:633.48px;width:38.4px;height:28.97px;background:#b5cde0"></div>
<div class="a" style="left:1066.2px;top:633.48px;width:38.4px;height:28.97px;background:#a3d6a6"></div>
<div class="a" style="left:1104.4px;top:633.48px;width:38.4px;height:28.97px;background:#d6a6ae"></div>
<div class="a" style="left:1142.6px;top:633.48px;width:73.6px;height:28.97px;background:#d5d3bc"></div>
<div class="a" style="left:85px;top:662.2px;width:1149px;height:28.97px;background:#d9dce4"></div>
<div class="a" style="left:410.5px;top:662.2px;width:39px;height:28.97px;background:#c3dbea"></div>
<div class="a" style="left:449.3px;top:662.2px;width:38.1px;height:28.97px;background:#aee2b0"></div>
<div class="a" style="left:487.2px;top:662.2px;width:38.2px;height:28.97px;background:#e2b4ba"></div>
<div class="a" style="left:525.2px;top:662.2px;width:73.7px;height:28.97px;background:#e1dfc9"></div>
<div class="a" style="left:616px;top:662.2px;width:38.6px;height:28.97px;background:#c3dbea"></div>
<div class="a" style="left:654.4px;top:662.2px;width:38.4px;height:28.97px;background:#aee2b0"></div>
<div class="a" style="left:692.6px;top:662.2px;width:38.7px;height:28.97px;background:#e2b4ba"></div>
<div class="a" style="left:731.1px;top:662.2px;width:73.8px;height:28.97px;background:#e1dfc9"></div>
<div class="a" style="left:821.7px;top:662.2px;width:38.7px;height:28.97px;background:#c3dbea"></div>
<div class="a" style="left:860.2px;top:662.2px;width:38.6px;height:28.97px;background:#aee2b0"></div>
<div class="a" style="left:898.6px;top:662.2px;width:38.7px;height:28.97px;background:#e2b4ba"></div>
<div class="a" style="left:937.1px;top:662.2px;width:73.5px;height:28.97px;background:#e1dfc9"></div>
<div class="a" style="left:1028px;top:662.2px;width:38.4px;height:28.97px;background:#c3dbea"></div>
<div class="a" style="left:1066.2px;top:662.2px;width:38.4px;height:28.97px;background:#aee2b0"></div>
<div class="a" style="left:1104.4px;top:662.2px;width:38.4px;height:28.97px;background:#e2b4ba"></div>
<div class="a" style="left:1142.6px;top:662.2px;width:73.6px;height:28.97px;background:#e1dfc9"></div>
<div class="a" style="left:85px;top:690.92px;width:1149px;height:28.97px;background:#c9ccd5"></div>
<div class="a" style="left:410.5px;top:690.92px;width:39px;height:28.97px;background:#b5cde0"></div>
<div class="a" style="left:449.3px;top:690.92px;width:38.1px;height:28.97px;background:#a3d6a6"></div>
<div class="a" style="left:487.2px;top:690.92px;width:38.2px;height:28.97px;background:#d6a6ae"></div>
<div class="a" style="left:525.2px;top:690.92px;width:73.7px;height:28.97px;background:#d5d3bc"></div>
<div class="a" style="left:616px;top:690.92px;width:38.6px;height:28.97px;background:#b5cde0"></div>
<div class="a" style="left:654.4px;top:690.92px;width:38.4px;height:28.97px;background:#a3d6a6"></div>
<div class="a" style="left:692.6px;top:690.92px;width:38.7px;height:28.97px;background:#d6a6ae"></div>
<div class="a" style="left:731.1px;top:690.92px;width:73.8px;height:28.97px;background:#d5d3bc"></div>
<div class="a" style="left:821.7px;top:690.92px;width:38.7px;height:28.97px;background:#b5cde0"></div>
<div class="a" style="left:860.2px;top:690.92px;width:38.6px;height:28.97px;background:#a3d6a6"></div>
<div class="a" style="left:898.6px;top:690.92px;width:38.7px;height:28.97px;background:#d6a6ae"></div>
<div class="a" style="left:937.1px;top:690.92px;width:73.5px;height:28.97px;background:#d5d3bc"></div>
<div class="a" style="left:1028px;top:690.92px;width:38.4px;height:28.97px;background:#b5cde0"></div>
<div class="a" style="left:1066.2px;top:690.92px;width:38.4px;height:28.97px;background:#a3d6a6"></div>
<div class="a" style="left:1104.4px;top:690.92px;width:38.4px;height:28.97px;background:#d6a6ae"></div>
<div class="a" style="left:1142.6px;top:690.92px;width:73.6px;height:28.97px;background:#d5d3bc"></div>
<div class="a" style="left:85px;top:719.64px;width:1149px;height:28.97px;background:#d9dce4"></div>
<div class="a" style="left:410.5px;top:719.64px;width:39px;height:28.97px;background:#c3dbea"></div>
<div class="a" style="left:449.3px;top:719.64px;width:38.1px;height:28.97px;background:#aee2b0"></div>
<div class="a" style="left:487.2px;top:719.64px;width:38.2px;height:28.97px;background:#e2b4ba"></div>
<div class="a" style="left:525.2px;top:719.64px;width:73.7px;height:28.97px;background:#e1dfc9"></div>
<div class="a" style="left:616px;top:719.64px;width:38.6px;height:28.97px;background:#c3dbea"></div>
<div class="a" style="left:654.4px;top:719.64px;width:38.4px;height:28.97px;background:#aee2b0"></div>
<div class="a" style="left:692.6px;top:719.64px;width:38.7px;height:28.97px;background:#e2b4ba"></div>
<div class="a" style="left:731.1px;top:719.64px;width:73.8px;height:28.97px;background:#e1dfc9"></div>
<div class="a" style="left:821.7px;top:719.64px;width:38.7px;height:28.97px;background:#c3dbea"></div>
<div class="a" style="left:860.2px;top:719.64px;width:38.6px;height:28.97px;background:#aee2b0"></div>
<div class="a" style="left:898.6px;top:719.64px;width:38.7px;height:28.97px;background:#e2b4ba"></div>
<div class="a" style="left:937.1px;top:719.64px;width:73.5px;height:28.97px;background:#e1dfc9"></div>
<div class="a" style="left:1028px;top:719.64px;width:38.4px;height:28.97px;background:#c3dbea"></div>
<div class="a" style="left:1066.2px;top:719.64px;width:38.4px;height:28.97px;background:#aee2b0"></div>
<div class="a" style="left:1104.4px;top:719.64px;width:38.4px;height:28.97px;background:#e2b4ba"></div>
<div class="a" style="left:1142.6px;top:719.64px;width:73.6px;height:28.97px;background:#e1dfc9"></div>
<div class="a" style="left:85px;top:375px;width:1149px;height:1.5px;background:rgba(255,255,255,0.55)"></div>
<div class="a" style="left:85px;top:748px;width:1149px;height:1px;background:#bcc0ca"></div>
<div class="a" style="left:410.5px;top:350px;width:188.2px;height:25px;background:#4d5e79;border-radius:6px 6px 0 0"></div>
<svg class="a" style="left:410.5px;top:342px" width="188.2" height="12" viewBox="0 0 188.2 12"><path d="M0.8 12 Q0.8 7.8 5 7.8 H88.5 L94.5 2.5 L100.5 7.8 H183.2 Q187.4 7.8 187.4 12" fill="none" stroke="#a9b6c9" stroke-width="1.4"/></svg>
<div class="gh" style="left:445px;top:330.5px;width:120px">AG</div>
<div class="sh" style="left:393.1px;top:356px;width:80px;color:#45b0ea">全部</div>
<div class="sh" style="left:432.7px;top:356px;width:80px;color:#22cc22">正常</div>
<div class="sh" style="left:469px;top:356px;width:80px;color:#e82828">告警</div>
<div class="sh" style="left:524.8px;top:356px;width:80px;color:#e8c040">故障率(%)</div>
<div class="a" style="left:616px;top:350px;width:188.7px;height:25px;background:#4d5e79;border-radius:6px 6px 0 0"></div>
<svg class="a" style="left:616px;top:342px" width="188.7" height="12" viewBox="0 0 188.7 12"><path d="M0.8 12 Q0.8 7.8 5 7.8 H88.7 L94.7 2.5 L100.7 7.8 H183.7 Q187.9 7.8 187.9 12" fill="none" stroke="#a9b6c9" stroke-width="1.4"/></svg>
<div class="gh" style="left:650.7px;top:330.5px;width:120px">BOM</div>
<div class="sh" style="left:596.3px;top:356px;width:80px;color:#45b0ea">全部</div>
<div class="sh" style="left:634.8px;top:356px;width:80px;color:#22cc22">正常</div>
<div class="sh" style="left:672.5px;top:356px;width:80px;color:#e82828">告警</div>
<div class="sh" style="left:728.4px;top:356px;width:80px;color:#e8c040">故障率(%)</div>
<div class="a" style="left:821.7px;top:350px;width:188.7px;height:25px;background:#4d5e79;border-radius:6px 6px 0 0"></div>
<svg class="a" style="left:821.7px;top:342px" width="188.7" height="12" viewBox="0 0 188.7 12"><path d="M0.8 12 Q0.8 7.8 5 7.8 H88.7 L94.7 2.5 L100.7 7.8 H183.7 Q187.9 7.8 187.9 12" fill="none" stroke="#a9b6c9" stroke-width="1.4"/></svg>
<div class="gh" style="left:856.4px;top:330.5px;width:120px">TVN</div>
<div class="sh" style="left:801.3px;top:356px;width:80px;color:#45b0ea">全部</div>
<div class="sh" style="left:840.5px;top:356px;width:80px;color:#22cc22">正常</div>
<div class="sh" style="left:877.9px;top:356px;width:80px;color:#e82828">告警</div>
<div class="sh" style="left:934.5px;top:356px;width:80px;color:#e8c040">故障率(%)</div>
<div class="a" style="left:1028px;top:350px;width:188px;height:25px;background:#4d5e79;border-radius:6px 6px 0 0"></div>
<svg class="a" style="left:1028px;top:342px" width="188" height="12" viewBox="0 0 188 12"><path d="M0.8 12 Q0.8 7.8 5 7.8 H88.5 L94.5 2.5 L100.5 7.8 H183 Q187.2 7.8 187.2 12" fill="none" stroke="#a9b6c9" stroke-width="1.4"/></svg>
<div class="gh" style="left:1062.5px;top:330.5px;width:120px">SC服务器</div>
<div class="sh" style="left:1008.5px;top:356px;width:80px;color:#45b0ea">全部</div>
<div class="sh" style="left:1046.2px;top:356px;width:80px;color:#22cc22">正常</div>
<div class="sh" style="left:1084px;top:356px;width:80px;color:#e82828">告警</div>
<div class="sh" style="left:1142.1px;top:356px;width:80px;color:#e8c040">故障率(%)</div>
<div class="td" style="left:118.8px;top:375px">8号线</div>
<div class="td" style="left:220.5px;top:375px">1</div>
<div class="td" style="left:317px;top:375px">28</div>
<div class="tn" style="left:402px;top:375px;width:60px;color:#3a4abf">18</div>
<div class="tn" style="left:438.9px;top:375px;width:60px;color:#2f9a3a">18</div>
<div class="tn" style="left:476.8px;top:375px;width:60px;color:#c0303a">0</div>
<div class="tn" style="left:533.7px;top:375px;width:60px;color:#7a7a2a">0</div>
<div class="tn" style="left:603px;top:375px;width:60px;color:#3a4abf">18</div>
<div class="tn" style="left:640.4px;top:375px;width:60px;color:#2f9a3a">18</div>
<div class="tn" style="left:677.7px;top:375px;width:60px;color:#c0303a">0</div>
<div class="tn" style="left:734.7px;top:375px;width:60px;color:#7a7a2a">0</div>
<div class="tn" style="left:812.8px;top:375px;width:60px;color:#3a4abf">18</div>
<div class="tn" style="left:849.8px;top:375px;width:60px;color:#2f9a3a">18</div>
<div class="tn" style="left:887.1px;top:375px;width:60px;color:#c0303a">0</div>
<div class="tn" style="left:944.6px;top:375px;width:60px;color:#7a7a2a">0</div>
<div class="tn" style="left:1015.5px;top:375px;width:60px;color:#3a4abf">18</div>
<div class="tn" style="left:1052.9px;top:375px;width:60px;color:#2f9a3a">18</div>
<div class="tn" style="left:1089.9px;top:375px;width:60px;color:#c0303a">0</div>
<div class="tn" style="left:1147.4px;top:375px;width:60px;color:#7a7a2a">0</div>
<div class="td" style="left:118.8px;top:403.72px">10号线</div>
<div class="td" style="left:220.5px;top:403.72px">24</div>
<div class="td" style="left:317px;top:403.72px">78</div>
<div class="tn" style="left:402px;top:403.72px;width:60px;color:#3a4abf">36</div>
<div class="tn" style="left:438.9px;top:403.72px;width:60px;color:#2f9a3a">36</div>
<div class="tn" style="left:476.8px;top:403.72px;width:60px;color:#c0303a">0</div>
<div class="tn" style="left:533.7px;top:403.72px;width:60px;color:#7a7a2a">0</div>
<div class="tn" style="left:603px;top:403.72px;width:60px;color:#3a4abf">36</div>
<div class="tn" style="left:640.4px;top:403.72px;width:60px;color:#2f9a3a">36</div>
<div class="tn" style="left:677.7px;top:403.72px;width:60px;color:#c0303a">0</div>
<div class="tn" style="left:734.7px;top:403.72px;width:60px;color:#7a7a2a">0</div>
<div class="tn" style="left:812.8px;top:403.72px;width:60px;color:#3a4abf">36</div>
<div class="tn" style="left:849.8px;top:403.72px;width:60px;color:#2f9a3a">36</div>
<div class="tn" style="left:887.1px;top:403.72px;width:60px;color:#c0303a">0</div>
<div class="tn" style="left:944.6px;top:403.72px;width:60px;color:#7a7a2a">0</div>
<div class="tn" style="left:1015.5px;top:403.72px;width:60px;color:#3a4abf">36</div>
<div class="tn" style="left:1052.9px;top:403.72px;width:60px;color:#2f9a3a">36</div>
<div class="tn" style="left:1089.9px;top:403.72px;width:60px;color:#c0303a">0</div>
<div class="tn" style="left:1147.4px;top:403.72px;width:60px;color:#7a7a2a">0</div>
<div class="td" style="left:118.8px;top:432.44px">9号线</div>
<div class="td" style="left:220.5px;top:432.44px">10</div>
<div class="td" style="left:317px;top:432.44px">36</div>
<div class="tn" style="left:402px;top:432.44px;width:60px;color:#3a4abf">22</div>
<div class="tn" style="left:438.9px;top:432.44px;width:60px;color:#2f9a3a">22</div>
<div class="tn" style="left:476.8px;top:432.44px;width:60px;color:#c0303a">0</div>
<div class="tn" style="left:533.7px;top:432.44px;width:60px;color:#7a7a2a">0</div>
<div class="tn" style="left:603px;top:432.44px;width:60px;color:#3a4abf">22</div>
<div class="tn" style="left:640.4px;top:432.44px;width:60px;color:#2f9a3a">22</div>
<div class="tn" style="left:677.7px;top:432.44px;width:60px;color:#c0303a">0</div>
<div class="tn" style="left:734.7px;top:432.44px;width:60px;color:#7a7a2a">0</div>
<div class="tn" style="left:812.8px;top:432.44px;width:60px;color:#3a4abf">22</div>
<div class="tn" style="left:849.8px;top:432.44px;width:60px;color:#2f9a3a">22</div>
<div class="tn" style="left:887.1px;top:432.44px;width:60px;color:#c0303a">0</div>
<div class="tn" style="left:944.6px;top:432.44px;width:60px;color:#7a7a2a">0</div>
<div class="tn" style="left:1015.5px;top:432.44px;width:60px;color:#3a4abf">22</div>
<div class="tn" style="left:1052.9px;top:432.44px;width:60px;color:#2f9a3a">22</div>
<div class="tn" style="left:1089.9px;top:432.44px;width:60px;color:#c0303a">0</div>
<div class="tn" style="left:1147.4px;top:432.44px;width:60px;color:#7a7a2a">0</div>
<div class="td" style="left:118.8px;top:461.16px">14号线</div>
<div class="td" style="left:220.5px;top:461.16px">16</div>
<div class="td" style="left:317px;top:461.16px">49</div>
<div class="tn" style="left:402px;top:461.16px;width:60px;color:#3a4abf">18</div>
<div class="tn" style="left:438.9px;top:461.16px;width:60px;color:#2f9a3a">18</div>
<div class="tn" style="left:476.8px;top:461.16px;width:60px;color:#c0303a">0</div>
<div class="tn" style="left:533.7px;top:461.16px;width:60px;color:#7a7a2a">0</div>
<div class="tn" style="left:603px;top:461.16px;width:60px;color:#3a4abf">18</div>
<div class="tn" style="left:640.4px;top:461.16px;width:60px;color:#2f9a3a">18</div>
<div class="tn" style="left:677.7px;top:461.16px;width:60px;color:#c0303a">0</div>
<div class="tn" style="left:734.7px;top:461.16px;width:60px;color:#7a7a2a">0</div>
<div class="tn" style="left:812.8px;top:461.16px;width:60px;color:#3a4abf">18</div>
<div class="tn" style="left:849.8px;top:461.16px;width:60px;color:#2f9a3a">18</div>
<div class="tn" style="left:887.1px;top:461.16px;width:60px;color:#c0303a">0</div>
<div class="tn" style="left:944.6px;top:461.16px;width:60px;color:#7a7a2a">0</div>
<div class="tn" style="left:1015.5px;top:461.16px;width:60px;color:#3a4abf">18</div>
<div class="tn" style="left:1052.9px;top:461.16px;width:60px;color:#2f9a3a">18</div>
<div class="tn" style="left:1089.9px;top:461.16px;width:60px;color:#c0303a">0</div>
<div class="tn" style="left:1147.4px;top:461.16px;width:60px;color:#7a7a2a">0</div>
<div class="td" style="left:118.8px;top:489.88px">2号线</div>
<div class="td" style="left:220.5px;top:489.88px">24</div>
<div class="td" style="left:317px;top:489.88px">46</div>
<div class="tn" style="left:402px;top:489.88px;width:60px;color:#3a4abf">36</div>
<div class="tn" style="left:438.9px;top:489.88px;width:60px;color:#2f9a3a">36</div>
<div class="tn" style="left:476.8px;top:489.88px;width:60px;color:#c0303a">0</div>
<div class="tn" style="left:533.7px;top:489.88px;width:60px;color:#7a7a2a">0</div>
<div class="tn" style="left:603px;top:489.88px;width:60px;color:#3a4abf">36</div>
<div class="tn" style="left:640.4px;top:489.88px;width:60px;color:#2f9a3a">36</div>
<div class="tn" style="left:677.7px;top:489.88px;width:60px;color:#c0303a">0</div>
<div class="tn" style="left:734.7px;top:489.88px;width:60px;color:#7a7a2a">0</div>
<div class="tn" style="left:812.8px;top:489.88px;width:60px;color:#3a4abf">36</div>
<div class="tn" style="left:849.8px;top:489.88px;width:60px;color:#2f9a3a">36</div>
<div class="tn" style="left:887.1px;top:489.88px;width:60px;color:#c0303a">0</div>
<div class="tn" style="left:944.6px;top:489.88px;width:60px;color:#7a7a2a">0</div>
<div class="tn" style="left:1015.5px;top:489.88px;width:60px;color:#3a4abf">36</div>
<div class="tn" style="left:1052.9px;top:489.88px;width:60px;color:#2f9a3a">36</div>
<div class="tn" style="left:1089.9px;top:489.88px;width:60px;color:#c0303a">0</div>
<div class="tn" style="left:1147.4px;top:489.88px;width:60px;color:#7a7a2a">0</div>
<div class="td" style="left:118.8px;top:518.6px">1号线</div>
<div class="td" style="left:220.5px;top:518.6px">14</div>
<div class="td" style="left:317px;top:518.6px">68</div>
<div class="tn" style="left:402px;top:518.6px;width:60px;color:#3a4abf">36</div>
<div class="tn" style="left:438.9px;top:518.6px;width:60px;color:#2f9a3a">30</div>
<div class="tn" style="left:476.8px;top:518.6px;width:60px;color:#c0303a">7</div>
<div class="tn" style="left:533.7px;top:518.6px;width:60px;color:#7a7a2a">19.75%</div>
<div class="tn" style="left:603px;top:518.6px;width:60px;color:#3a4abf">36</div>
<div class="tn" style="left:640.4px;top:518.6px;width:60px;color:#2f9a3a">30</div>
<div class="tn" style="left:677.7px;top:518.6px;width:60px;color:#c0303a">7</div>
<div class="tn" style="left:734.7px;top:518.6px;width:60px;color:#7a7a2a">19.75%</div>
<div class="tn" style="left:812.8px;top:518.6px;width:60px;color:#3a4abf">36</div>
<div class="tn" style="left:849.8px;top:518.6px;width:60px;color:#2f9a3a">30</div>
<div class="tn" style="left:887.1px;top:518.6px;width:60px;color:#c0303a">7</div>
<div class="tn" style="left:944.6px;top:518.6px;width:60px;color:#7a7a2a">19.75%</div>
<div class="tn" style="left:1015.5px;top:518.6px;width:60px;color:#3a4abf">36</div>
<div class="tn" style="left:1052.9px;top:518.6px;width:60px;color:#2f9a3a">30</div>
<div class="tn" style="left:1089.9px;top:518.6px;width:60px;color:#c0303a">7</div>
<div class="tn" style="left:1147.4px;top:518.6px;width:60px;color:#7a7a2a">19.75%</div>
<div class="td" style="left:118.8px;top:547.32px">4号线</div>
<div class="td" style="left:220.5px;top:547.32px">9</div>
<div class="td" style="left:317px;top:547.32px">30</div>
<div class="tn" style="left:402px;top:547.32px;width:60px;color:#3a4abf">18</div>
<div class="tn" style="left:438.9px;top:547.32px;width:60px;color:#2f9a3a">18</div>
<div class="tn" style="left:476.8px;top:547.32px;width:60px;color:#c0303a">0</div>
<div class="tn" style="left:533.7px;top:547.32px;width:60px;color:#7a7a2a">0</div>
<div class="tn" style="left:603px;top:547.32px;width:60px;color:#3a4abf">18</div>
<div class="tn" style="left:640.4px;top:547.32px;width:60px;color:#2f9a3a">18</div>
<div class="tn" style="left:677.7px;top:547.32px;width:60px;color:#c0303a">0</div>
<div class="tn" style="left:734.7px;top:547.32px;width:60px;color:#7a7a2a">0</div>
<div class="tn" style="left:812.8px;top:547.32px;width:60px;color:#3a4abf">18</div>
<div class="tn" style="left:849.8px;top:547.32px;width:60px;color:#2f9a3a">18</div>
<div class="tn" style="left:887.1px;top:547.32px;width:60px;color:#c0303a">0</div>
<div class="tn" style="left:944.6px;top:547.32px;width:60px;color:#7a7a2a">0</div>
<div class="tn" style="left:1015.5px;top:547.32px;width:60px;color:#3a4abf">18</div>
<div class="tn" style="left:1052.9px;top:547.32px;width:60px;color:#2f9a3a">18</div>
<div class="tn" style="left:1089.9px;top:547.32px;width:60px;color:#c0303a">0</div>
<div class="tn" style="left:1147.4px;top:547.32px;width:60px;color:#7a7a2a">0</div>
<div class="td" style="left:118.8px;top:576.04px">5号线</div>
<div class="td" style="left:220.5px;top:576.04px">22</div>
<div class="td" style="left:317px;top:576.04px">85</div>
<div class="tn" style="left:402px;top:576.04px;width:60px;color:#3a4abf">36</div>
<div class="tn" style="left:438.9px;top:576.04px;width:60px;color:#2f9a3a">36</div>
<div class="tn" style="left:476.8px;top:576.04px;width:60px;color:#c0303a">0</div>
<div class="tn" style="left:533.7px;top:576.04px;width:60px;color:#7a7a2a">0</div>
<div class="tn" style="left:603px;top:576.04px;width:60px;color:#3a4abf">36</div>
<div class="tn" style="left:640.4px;top:576.04px;width:60px;color:#2f9a3a">36</div>
<div class="tn" style="left:677.7px;top:576.04px;width:60px;color:#c0303a">0</div>
<div class="tn" style="left:734.7px;top:576.04px;width:60px;color:#7a7a2a">0</div>
<div class="tn" style="left:812.8px;top:576.04px;width:60px;color:#3a4abf">36</div>
<div class="tn" style="left:849.8px;top:576.04px;width:60px;color:#2f9a3a">36</div>
<div class="tn" style="left:887.1px;top:576.04px;width:60px;color:#c0303a">0</div>
<div class="tn" style="left:944.6px;top:576.04px;width:60px;color:#7a7a2a">0</div>
<div class="tn" style="left:1015.5px;top:576.04px;width:60px;color:#3a4abf">36</div>
<div class="tn" style="left:1052.9px;top:576.04px;width:60px;color:#2f9a3a">36</div>
<div class="tn" style="left:1089.9px;top:576.04px;width:60px;color:#c0303a">0</div>
<div class="tn" style="left:1147.4px;top:576.04px;width:60px;color:#7a7a2a">0</div>
<div class="td" style="left:118.8px;top:604.76px">八通线</div>
<div class="td" style="left:220.5px;top:604.76px">18</div>
<div class="td" style="left:317px;top:604.76px">64</div>
<div class="tn" style="left:402px;top:604.76px;width:60px;color:#3a4abf">22</div>
<div class="tn" style="left:438.9px;top:604.76px;width:60px;color:#2f9a3a">22</div>
<div class="tn" style="left:476.8px;top:604.76px;width:60px;color:#c0303a">0</div>
<div class="tn" style="left:533.7px;top:604.76px;width:60px;color:#7a7a2a">0</div>
<div class="tn" style="left:603px;top:604.76px;width:60px;color:#3a4abf">22</div>
<div class="tn" style="left:640.4px;top:604.76px;width:60px;color:#2f9a3a">22</div>
<div class="tn" style="left:677.7px;top:604.76px;width:60px;color:#c0303a">0</div>
<div class="tn" style="left:734.7px;top:604.76px;width:60px;color:#7a7a2a">0</div>
<div class="tn" style="left:812.8px;top:604.76px;width:60px;color:#3a4abf">22</div>
<div class="tn" style="left:849.8px;top:604.76px;width:60px;color:#2f9a3a">22</div>
<div class="tn" style="left:887.1px;top:604.76px;width:60px;color:#c0303a">0</div>
<div class="tn" style="left:944.6px;top:604.76px;width:60px;color:#7a7a2a">0</div>
<div class="tn" style="left:1015.5px;top:604.76px;width:60px;color:#3a4abf">22</div>
<div class="tn" style="left:1052.9px;top:604.76px;width:60px;color:#2f9a3a">22</div>
<div class="tn" style="left:1089.9px;top:604.76px;width:60px;color:#c0303a">0</div>
<div class="tn" style="left:1147.4px;top:604.76px;width:60px;color:#7a7a2a">0</div>
<div class="td" style="left:118.8px;top:633.48px">良乡线</div>
<div class="td" style="left:220.5px;top:633.48px">16</div>
<div class="td" style="left:317px;top:633.48px">75</div>
<div class="tn" style="left:402px;top:633.48px;width:60px;color:#3a4abf">18</div>
<div class="tn" style="left:438.9px;top:633.48px;width:60px;color:#2f9a3a">18</div>
<div class="tn" style="left:476.8px;top:633.48px;width:60px;color:#c0303a">0</div>
<div class="tn" style="left:533.7px;top:633.48px;width:60px;color:#7a7a2a">0</div>
<div class="tn" style="left:603px;top:633.48px;width:60px;color:#3a4abf">18</div>
<div class="tn" style="left:640.4px;top:633.48px;width:60px;color:#2f9a3a">18</div>
<div class="tn" style="left:677.7px;top:633.48px;width:60px;color:#c0303a">0</div>
<div class="tn" style="left:734.7px;top:633.48px;width:60px;color:#7a7a2a">0</div>
<div class="tn" style="left:812.8px;top:633.48px;width:60px;color:#3a4abf">18</div>
<div class="tn" style="left:849.8px;top:633.48px;width:60px;color:#2f9a3a">18</div>
<div class="tn" style="left:887.1px;top:633.48px;width:60px;color:#c0303a">0</div>
<div class="tn" style="left:944.6px;top:633.48px;width:60px;color:#7a7a2a">0</div>
<div class="tn" style="left:1015.5px;top:633.48px;width:60px;color:#3a4abf">18</div>
<div class="tn" style="left:1052.9px;top:633.48px;width:60px;color:#2f9a3a">18</div>
<div class="tn" style="left:1089.9px;top:633.48px;width:60px;color:#c0303a">0</div>
<div class="tn" style="left:1147.4px;top:633.48px;width:60px;color:#7a7a2a">0</div>
<div class="td" style="left:118.8px;top:662.2px">昌平线</div>
<div class="td" style="left:220.5px;top:662.2px">16</div>
<div class="td" style="left:317px;top:662.2px">69</div>
<div class="tn" style="left:402px;top:662.2px;width:60px;color:#3a4abf">36</div>
<div class="tn" style="left:438.9px;top:662.2px;width:60px;color:#2f9a3a">36</div>
<div class="tn" style="left:476.8px;top:662.2px;width:60px;color:#c0303a">0</div>
<div class="tn" style="left:533.7px;top:662.2px;width:60px;color:#7a7a2a">0</div>
<div class="tn" style="left:603px;top:662.2px;width:60px;color:#3a4abf">36</div>
<div class="tn" style="left:640.4px;top:662.2px;width:60px;color:#2f9a3a">36</div>
<div class="tn" style="left:677.7px;top:662.2px;width:60px;color:#c0303a">0</div>
<div class="tn" style="left:734.7px;top:662.2px;width:60px;color:#7a7a2a">0</div>
<div class="tn" style="left:812.8px;top:662.2px;width:60px;color:#3a4abf">36</div>
<div class="tn" style="left:849.8px;top:662.2px;width:60px;color:#2f9a3a">36</div>
<div class="tn" style="left:887.1px;top:662.2px;width:60px;color:#c0303a">0</div>
<div class="tn" style="left:944.6px;top:662.2px;width:60px;color:#7a7a2a">0</div>
<div class="tn" style="left:1015.5px;top:662.2px;width:60px;color:#3a4abf">36</div>
<div class="tn" style="left:1052.9px;top:662.2px;width:60px;color:#2f9a3a">36</div>
<div class="tn" style="left:1089.9px;top:662.2px;width:60px;color:#c0303a">0</div>
<div class="tn" style="left:1147.4px;top:662.2px;width:60px;color:#7a7a2a">0</div>
<div class="td" style="left:118.8px;top:690.92px">顺义线</div>
<div class="td" style="left:220.5px;top:690.92px">14</div>
<div class="td" style="left:317px;top:690.92px">28</div>
<div class="tn" style="left:402px;top:690.92px;width:60px;color:#3a4abf">36</div>
<div class="tn" style="left:438.9px;top:690.92px;width:60px;color:#2f9a3a">36</div>
<div class="tn" style="left:476.8px;top:690.92px;width:60px;color:#c0303a">0</div>
<div class="tn" style="left:533.7px;top:690.92px;width:60px;color:#7a7a2a">0</div>
<div class="tn" style="left:603px;top:690.92px;width:60px;color:#3a4abf">36</div>
<div class="tn" style="left:640.4px;top:690.92px;width:60px;color:#2f9a3a">36</div>
<div class="tn" style="left:677.7px;top:690.92px;width:60px;color:#c0303a">0</div>
<div class="tn" style="left:734.7px;top:690.92px;width:60px;color:#7a7a2a">0</div>
<div class="tn" style="left:812.8px;top:690.92px;width:60px;color:#3a4abf">36</div>
<div class="tn" style="left:849.8px;top:690.92px;width:60px;color:#2f9a3a">36</div>
<div class="tn" style="left:887.1px;top:690.92px;width:60px;color:#c0303a">0</div>
<div class="tn" style="left:944.6px;top:690.92px;width:60px;color:#7a7a2a">0</div>
<div class="tn" style="left:1015.5px;top:690.92px;width:60px;color:#3a4abf">36</div>
<div class="tn" style="left:1052.9px;top:690.92px;width:60px;color:#2f9a3a">36</div>
<div class="tn" style="left:1089.9px;top:690.92px;width:60px;color:#c0303a">0</div>
<div class="tn" style="left:1147.4px;top:690.92px;width:60px;color:#7a7a2a">0</div>
<div class="td" style="left:118.8px;top:719.64px">亦庄线</div>
<div class="td" style="left:220.5px;top:719.64px">22</div>
<div class="td" style="left:317px;top:719.64px">37</div>
<div class="tn" style="left:402px;top:719.64px;width:60px;color:#3a4abf">36</div>
<div class="tn" style="left:438.9px;top:719.64px;width:60px;color:#2f9a3a">36</div>
<div class="tn" style="left:476.8px;top:719.64px;width:60px;color:#c0303a">0</div>
<div class="tn" style="left:533.7px;top:719.64px;width:60px;color:#7a7a2a">0</div>
<div class="tn" style="left:603px;top:719.64px;width:60px;color:#3a4abf">36</div>
<div class="tn" style="left:640.4px;top:719.64px;width:60px;color:#2f9a3a">36</div>
<div class="tn" style="left:677.7px;top:719.64px;width:60px;color:#c0303a">0</div>
<div class="tn" style="left:734.7px;top:719.64px;width:60px;color:#7a7a2a">0</div>
<div class="tn" style="left:812.8px;top:719.64px;width:60px;color:#3a4abf">36</div>
<div class="tn" style="left:849.8px;top:719.64px;width:60px;color:#2f9a3a">36</div>
<div class="tn" style="left:887.1px;top:719.64px;width:60px;color:#c0303a">0</div>
<div class="tn" style="left:944.6px;top:719.64px;width:60px;color:#7a7a2a">0</div>
<div class="tn" style="left:1015.5px;top:719.64px;width:60px;color:#3a4abf">36</div>
<div class="tn" style="left:1052.9px;top:719.64px;width:60px;color:#2f9a3a">36</div>
<div class="tn" style="left:1089.9px;top:719.64px;width:60px;color:#c0303a">0</div>
<div class="tn" style="left:1147.4px;top:719.64px;width:60px;color:#7a7a2a">0</div>
<div class="pg" style="left:931px;width:34px;background:#49a0ec;color:#fff;border-radius:2px 0 0 2px">1</div>
<div class="pg" style="left:965px;width:32px;border:1px solid #e6e8eb;background:#fff">2</div>
<div class="pg" style="left:996px;width:32px;border:1px solid #e6e8eb;background:#fff">3</div>
<div class="pg" style="left:1027px;width:33px;border:1px solid #e6e8eb;background:#fff">4</div>
<div class="pg" style="left:1059px;width:33px;border:1px solid #e6e8eb;background:#fff">5</div>
<div class="pg" style="left:1091px;width:37px;border:1px solid #e6e8eb;background:#fff">...</div>
<div class="pg" style="left:1127px;width:48px;border:1px solid #e6e8eb;background:#fff">末页</div>
<div class="pg" style="left:1174px;width:59px;border:1px solid #e6e8eb;background:#fff">下一页</div>
<div class="a" style="left:1257px;top:110px;width:218px;height:684px;background:#fff;overflow:hidden">
<div class="ptitle" style="left:11px;top:8px">告警列表</div>
<div class="a" style="left:11px;top:32px;width:197px;height:1px;background:#eef0f3"></div>
<div class="a" style="left:13px;top:42px;width:2px;height:650px;background:#e4e6ea"></div>
<div class="a" style="left:10.5px;top:39px;width:0;height:0;border-left:3.5px solid transparent;border-right:3.5px solid transparent;border-top:4px solid #e4e6ea"></div>
<div class="dot" style="left:10.5px;top:50.5px"></div>
<div class="tm" style="left:28px;top:48px">16:33:22</div>
<div class="al" style="left:28px;top:65px;background:#e9e8cb">西直门站 客流超限55%</div>
<div class="dot" style="left:10.5px;top:126px"></div>
<div class="tm" style="left:28px;top:123.5px">16:33:22</div>
<div class="al" style="left:28px;top:140.5px;background:#d0e6d0">东小口站 客流超限20%</div>
<div class="dot" style="left:10.5px;top:201.5px"></div>
<div class="tm" style="left:28px;top:199px">16:33:22</div>
<div class="al" style="left:28px;top:216px;background:#ecd2d2">惠新西街南口站 客流超限80%</div>
<div class="dot" style="left:10.5px;top:277px"></div>
<div class="tm" style="left:28px;top:274.5px">16:33:22</div>
<div class="al" style="left:28px;top:291.5px;background:#e9e8cb">西直门站 客流超限55%</div>
<div class="dot" style="left:10.5px;top:352.5px"></div>
<div class="tm" style="left:28px;top:350px">16:33:22</div>
<div class="al" style="left:28px;top:367px;background:#e9e8cb">东小口站 客流超限20%</div>
<div class="dot" style="left:10.5px;top:428px"></div>
<div class="tm" style="left:28px;top:425.5px">16:33:22</div>
<div class="al" style="left:28px;top:442.5px;background:#e9e8cb">惠新西街南口站 客流超限80%</div>
<div class="dot" style="left:10.5px;top:503.5px"></div>
<div class="tm" style="left:28px;top:501px">16:33:22</div>
<div class="al" style="left:28px;top:518px;background:#e9e8cb">西直门站 客流超限55%</div>
<div class="dot" style="left:10.5px;top:579px"></div>
<div class="tm" style="left:28px;top:576.5px">16:33:22</div>
<div class="al" style="left:28px;top:593.5px;background:#d0e6d0">东小口站 客流超限20%</div>
<div class="dot" style="left:10.5px;top:654.5px"></div>
<div class="tm" style="left:28px;top:652px">16:33:22</div>
<div class="al" style="left:28px;top:669px;background:#d0e6d0">惠新西街南口站 客流超限80%</div>
</div>
<div class="a" style="left:0;top:805px;width:1486px;height:30px;background:#fafbfc"></div>
<div class="a" style="left:1475px;top:63px;width:2px;height:742px;background:#e6e9ef"></div><div class="a" style="left:1484px;top:63px;width:2px;height:742px;background:#f4f6f9"></div>
<svg class="a" style="left:6px;top:814px" width="17" height="15" viewBox="0 0 17 15">
<rect x="0.6" y="4" width="3" height="7" rx="1" fill="#4a9ee8"/><path d="M5 3.5 L10.2 0.8 V14.2 L5 11.5 Z" fill="#4a9ee8"/><path d="M13 3.3 L15 1.9 M13.2 7.5 H15.6 M13 11.7 L15 13.1" stroke="#4a9ee8" stroke-width="1.3" stroke-linecap="round"/>
</svg>
<div class="a" style="left:30px;top:813px;width:0;height:18px;border-left:1px dashed #d8dbe0"></div>
<div class="tri" style="left:44px"></div><div class="tk" style="left:51px;font-size:10.73px">14：30分天通苑南站客流超限<span style="color:#e82020">30</span>%</div>
<div class="tri" style="left:237px"></div><div class="tk" style="left:244px;font-size:10.75px">方便乘客夜间出行 提升运营服务水平 4月28日起北京地铁多条线路延时运营</div>
<div class="tri" style="left:624px"></div><div class="tk" style="left:631px;font-size:10.73px">方便乘客夜间出行 提升运营服务水平 4月28日起北京地铁多条线路延时运营</div>
<div class="tri" style="left:1018px"></div><div class="tk" style="left:1025px;font-size:10.55px">目前呼家楼站客流较大,6号线下行(开往海淀五路居方向)在呼家楼站采取部分在呼家楼站采取部分</div>
</body></html>
